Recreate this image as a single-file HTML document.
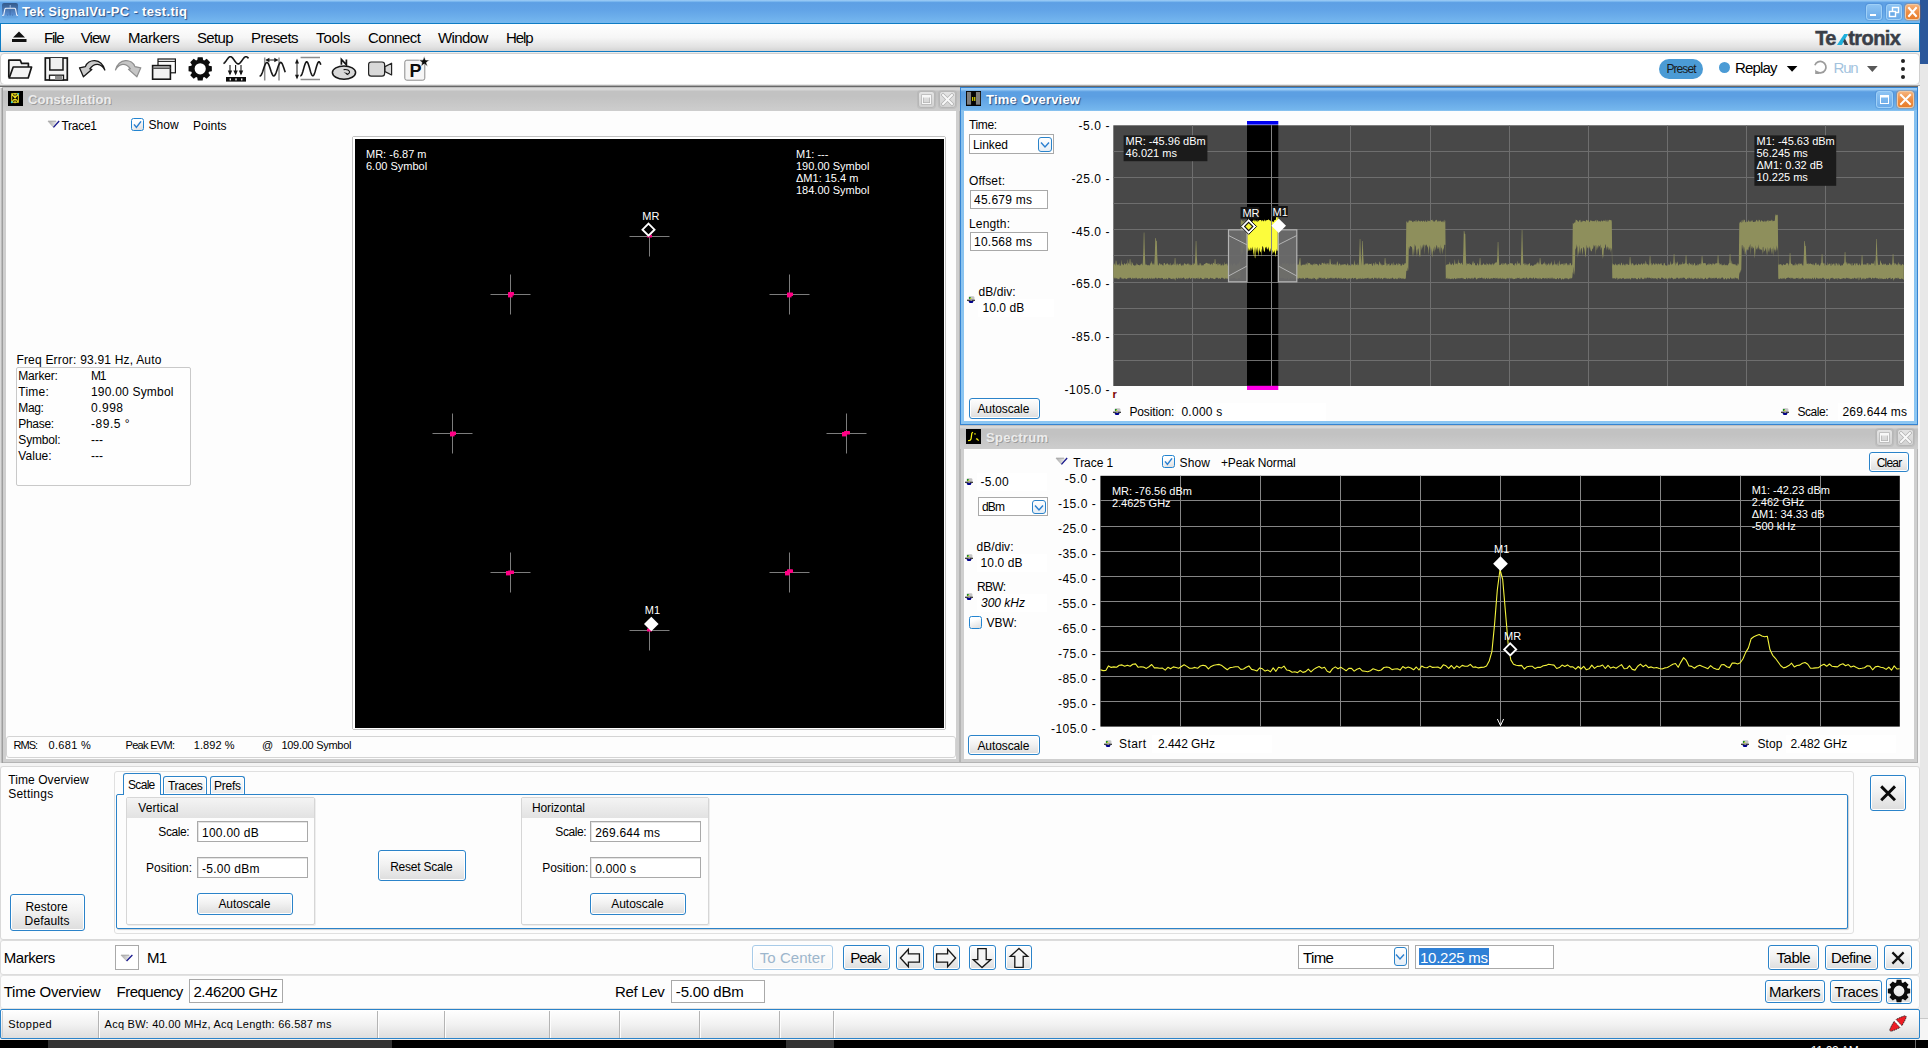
<!DOCTYPE html>
<html><head><meta charset="utf-8"><title>Tek SignalVu-PC - test.tiq</title>
<style>
html,body{margin:0;padding:0;height:1048px;overflow:hidden;}
body{width:1928px;height:1048px;overflow:hidden;position:relative;background:#f0f0f0;font-family:"Liberation Sans",sans-serif;}
div,span.t,svg{position:absolute;box-sizing:border-box;}
span.t{white-space:pre;}
.btn{border:1px solid #2b83c9;border-radius:3px;background:linear-gradient(#fefefe,#f2f2f2 45%,#dddddd);box-shadow:inset 0 0 0 1px #fff;}
.inp{border:1px solid #a9a9a9;background:#fff;box-shadow:inset 1px 1px 0 #e4e4e4;}
.dd{border:1px solid #2b83c9;border-radius:3px;background:linear-gradient(#fefefe,#e4ecf4);}
</style></head>
<body>
<div style="left:1920px;top:0px;width:8px;height:64px;background:#2b579a;"></div>
<div style="left:1920px;top:64px;width:8px;height:954px;background:#e8e8e8;"></div>
<div style="left:1920px;top:1018px;width:8px;height:22px;background:#f5f5f5;border-top:1px solid #c8c8c8;"></div>
<div style="left:0px;top:1040px;width:1928px;height:8px;background:#000;"></div>
<div style="left:48px;top:1040px;width:344px;height:8px;background:#333;"></div>
<div style="left:786px;top:1040px;width:48px;height:8px;background:#333;"></div>
<div style="left:1915px;top:1040px;width:1px;height:8px;background:#6a6a6a;"></div>
<span class="t" style="left:1810.7px;top:1044.6px;font-size:12px;line-height:12px;color:#fff;letter-spacing:-0.26px;">11:02 AM</span>
<div style="left:0px;top:0px;width:1920px;height:24px;background:linear-gradient(#a2cff6 0,#7db9f0 1.4px,#5d9fe4 2.6px,#62a4e7 45%,#76b8ef);border-bottom:1px solid #0f7cc4;"></div>
<span class="t" style="left:22.0px;top:5px;font-size:13px;line-height:13px;color:#fff;font-weight:bold;text-shadow:1px 1px 1px rgba(10,30,80,.65);letter-spacing:0.33px;">Tek SignalVu-PC - test.tiq</span>
<svg style="left:2px;top:3px" width="17" height="16" viewBox="2 3 17 16"><defs><linearGradient id="ai" x1="0" y1="0" x2="0" y2="1"><stop offset="0" stop-color="#33598a"/><stop offset="0.78" stop-color="#5a8fd4"/><stop offset="0.8" stop-color="#5f9cdc"/><stop offset="1" stop-color="#66a6e2"/></linearGradient></defs><rect x="2" y="3" width="16" height="15.6" rx="2" fill="url(#ai)"/><path d="M2.2 15.5 L3.7 15 L4.8 9.3 Q5 8.3 6 8.3 L14.4 8.3 Q15.4 8.3 15.6 9.3 L16.7 15 L18 15.5" fill="none" stroke="#eef2fa" stroke-width="1.05"/><path d="M10.2 5 V8" stroke="#a9c3e6" stroke-width="0.9"/><path d="M7.6 14.6 V15.6 M12.6 14.6 V15.6 M10.1 10 V15.6" stroke="#3d68a4" stroke-width="0.8"/></svg>
<div style="left:1866px;top:4px;width:16px;height:16px;background:linear-gradient(#8cc3f3,#6aaae8);border:1px solid #9fd0f7;border-radius:3px;box-shadow:0 0 0 1px #3a78c244;"></div><svg style="left:1866px;top:4px" width="16" height="16" viewBox="0 0 16 16"><rect x="4" y="10" width="6" height="2" fill="#fff"/></svg>
<div style="left:1886px;top:4px;width:16px;height:16px;background:linear-gradient(#8cc3f3,#6aaae8);border:1px solid #9fd0f7;border-radius:3px;box-shadow:0 0 0 1px #3a78c244;"></div><svg style="left:1886px;top:4px" width="16" height="16" viewBox="0 0 16 16"><rect x="6.5" y="3.5" width="6" height="5" fill="none" stroke="#fff" stroke-width="1.4"/><rect x="3.5" y="7.5" width="6" height="5" fill="#6aaae8" stroke="#fff" stroke-width="1.4"/></svg>
<div style="left:1905px;top:4px;width:15px;height:16px;background:linear-gradient(#f6b27a,#ee8f45 50%,#e87d2a);border:1px solid #f3c9a0;border-radius:3px;box-shadow:0 0 0 1px #c96a2244;"></div><svg style="left:1905px;top:4px" width="15" height="16" viewBox="0 0 15 16"><path d="M4 4 L11 12 M11 4 L4 12" stroke="#fff" stroke-width="2" stroke-linecap="square"/></svg>
<div style="left:0px;top:24px;width:1920px;height:28px;background:linear-gradient(#ffffff,#f6f6f6 50%,#e2e2e2 85%,#d4d4d4);border-left:1px solid #0f7cc4;border-right:1px solid #0f7cc4;border-bottom:1px solid #0f7cc4;"></div>
<svg style="left:11px;top:31px" width="16" height="12" viewBox="0 0 16 12"><path d="M8 0.5 L14 6.5 L2 6.5 Z" fill="#111"/><rect x="1" y="8" width="14.5" height="3" fill="#111"/></svg>
<span class="t" style="left:44.0px;top:30px;font-size:15px;line-height:15px;color:#000;letter-spacing:-1.20px;">File</span>
<span class="t" style="left:80.7px;top:30px;font-size:15px;line-height:15px;color:#000;letter-spacing:-0.92px;">View</span>
<span class="t" style="left:128.0px;top:30px;font-size:15px;line-height:15px;color:#000;letter-spacing:-0.41px;">Markers</span>
<span class="t" style="left:197.0px;top:30px;font-size:15px;line-height:15px;color:#000;letter-spacing:-0.63px;">Setup</span>
<span class="t" style="left:251.0px;top:30px;font-size:15px;line-height:15px;color:#000;letter-spacing:-0.56px;">Presets</span>
<span class="t" style="left:316.0px;top:30px;font-size:15px;line-height:15px;color:#000;letter-spacing:-0.11px;">Tools</span>
<span class="t" style="left:368.0px;top:30px;font-size:15px;line-height:15px;color:#000;letter-spacing:-0.48px;">Connect</span>
<span class="t" style="left:438.0px;top:30px;font-size:15px;line-height:15px;color:#000;letter-spacing:-0.61px;">Window</span>
<span class="t" style="left:506.0px;top:30px;font-size:15px;line-height:15px;color:#000;letter-spacing:-1.12px;">Help</span>
<span class="t" style="left:1815.2px;top:27.799999999999997px;font-size:20px;line-height:20px;color:#3a3f48;font-weight:bold;-webkit-text-stroke:0.5px #3a3f48;letter-spacing:-0.66px;">Te</span>
<span class="t" style="left:1848.2px;top:27.799999999999997px;font-size:20px;line-height:20px;color:#3a3f48;font-weight:bold;-webkit-text-stroke:0.5px #3a3f48;letter-spacing:-0.55px;">tronix</span>
<svg style="left:1834px;top:28px" width="22" height="20" viewBox="1834 28 22 20"><path d="M1837 44.9 L1841.8 44.9 L1848.2 34.1 L1844.2 34.1 Z" fill="#1fb0dc"/><path d="M1843.2 41.4 L1844.9 38.6 L1848.2 44.9 L1844.6 44.9 Z" fill="#3a3f48"/><path d="M1849 37.4 L1852.2 30.6 L1852.2 37.4 Z" fill="#3a3f48"/></svg>
<div style="left:0px;top:52px;width:1920px;height:2px;background:#ececec;"></div>
<div style="left:0px;top:53px;width:1920px;height:32px;background:#fff;border:1px solid #d0d0d0;border-radius:4px;"></div>
<div style="left:0px;top:83.6px;width:1920px;height:3.5px;background:linear-gradient(#ffffff 0,#d4d4d4 30%,#9a9a9a 60%,#686868 82%,#666 100%);"></div>
<div style="left:1659px;top:59px;width:44px;height:20px;background:#4b9bd5;border-radius:10px;"></div>
<span class="t" style="left:1666.5px;top:63px;font-size:12px;line-height:12px;color:#1a1a1a;letter-spacing:-0.94px;">Preset</span>
<div style="left:1718.5px;top:62px;width:11px;height:11px;background:#4b9bd5;border-radius:50%;"></div>
<span class="t" style="left:1735.0px;top:60px;font-size:15px;line-height:15px;color:#000;letter-spacing:-0.84px;">Replay</span>
<svg style="left:1786px;top:65px" width="12" height="8" viewBox="0 0 12 8"><path d="M0.8 1 L11.4 1 L6.1 6.8 Z" fill="#000"/></svg>
<svg style="left:1812px;top:58px" width="18" height="18" viewBox="1812 58 18 18"><path d="M1814.9 65.2 A5.7 5.7 0 1 1 1817.0 71.8" fill="none" stroke="#9b9b9b" stroke-width="1.7"/><path d="M1815.2 69.4 L1815.2 74 L1819.8 74 Z" fill="#9b9b9b"/></svg>
<span class="t" style="left:1833.5px;top:60px;font-size:15px;line-height:15px;color:#a3c3de;letter-spacing:-1.20px;">Run</span>
<svg style="left:1866px;top:65px" width="12" height="8" viewBox="0 0 12 8"><path d="M1 1.1 L11.7 1.1 L6.35 6.9 Z" fill="#585858"/></svg>
<div style="left:1901.1px;top:58.8px;width:4.4px;height:4.4px;background:#222;border-radius:50%;"></div>
<div style="left:1901.1px;top:66.89999999999999px;width:4.4px;height:4.4px;background:#222;border-radius:50%;"></div>
<div style="left:1901.1px;top:74.89999999999999px;width:4.4px;height:4.4px;background:#222;border-radius:50%;"></div>
<svg style="left:0;top:0" width="440" height="90" viewBox="0 0 440 90"><path d="M8.8 77.5 L8.8 60.2 L20.2 60.2 L21.6 63.4 L28.4 63.4 L28.4 67" fill="#f2f2f2" stroke="#161616" stroke-width="1.7" stroke-linejoin="round"/><path d="M9.2 78 L13.2 67 L31.6 67 L28.2 78 Z" fill="#f4f4f4" stroke="#161616" stroke-width="1.7" stroke-linejoin="round"/><rect x="45.3" y="58" width="22" height="22" fill="#f4f4f4" stroke="#161616" stroke-width="1.7"/><path d="M49.8 58 L49.8 70 L63 70 L63 58" fill="#f0f0f0" stroke="#161616" stroke-width="1.5"/><rect x="49.5" y="75.2" width="14" height="4.8" fill="#fff" stroke="#161616" stroke-width="1.3"/><rect x="55" y="75.8" width="7.2" height="4" fill="#8c8c8c"/><path d="M79.5 67.8 L85.4 66.6 C88.0 59.0 101.2 57.0 104.8 70.0 C101.0 62.6 94.2 62.6 89.8 68.8 L91.8 69.4 L83.4 76.8 Z" fill="#cbcbcb" stroke="#161616" stroke-width="1.3" stroke-linejoin="round"/><path d="M140.8 67.8 L134.9 66.6 C132.3 59.0 119.1 57.0 115.5 70.0 C119.3 62.6 126.1 62.6 130.5 68.8 L128.5 69.4 L136.9 76.8 Z" fill="#c6c6c6" stroke="#8e8e8e" stroke-width="1.2" stroke-linejoin="round"/><rect x="158" y="59" width="17.4" height="13.8" fill="#fafafa" stroke="#161616" stroke-width="1.2"/><path d="M158 61.4 H175.4" stroke="#161616" stroke-width="1"/><rect x="152.6" y="65.6" width="17.8" height="13.6" fill="#f2f2f2" stroke="#161616" stroke-width="1.6"/><path d="M152.6 68.2 H170.4" stroke="#555" stroke-width="1.6"/><path d="M197.24 60.00 L197.74 57.16 L202.66 57.16 L203.16 60.00 L204.32 60.48 L206.70 58.83 L210.17 62.30 L208.52 64.68 L209.00 65.84 L211.84 66.34 L211.84 71.26 L209.00 71.76 L208.52 72.92 L210.17 75.30 L206.70 78.77 L204.32 77.12 L203.16 77.60 L202.66 80.44 L197.74 80.44 L197.24 77.60 L196.08 77.12 L193.70 78.77 L190.23 75.30 L191.88 72.92 L191.40 71.76 L188.56 71.26 L188.56 66.34 L191.40 65.84 L191.88 64.68 L190.23 62.30 L193.70 58.83 L196.08 60.48 Z M205.80 68.80 A5.6 5.6 0 1 0 194.60 68.80 A5.6 5.6 0 1 0 205.80 68.80 Z" fill="#0c0c0c" fill-rule="evenodd"/><path d="M223.50 63.66 L224.12 63.23 L224.75 62.61 L225.38 61.85 L226.00 61.00 L226.62 60.10 L227.25 59.21 L227.88 58.39 L228.50 57.69 L229.12 57.16 L229.75 56.82 L230.38 56.70 L231.00 56.81 L231.62 57.13 L232.25 57.66 L232.88 58.35 L233.50 59.17 L234.12 60.05 L234.75 60.95 L235.38 61.81 L236.00 62.58 L236.62 63.20 L237.25 63.64 L237.88 63.87 L238.50 63.87 L239.12 63.66 L239.75 63.23 L240.38 62.61 L241.00 61.85 L241.62 61.00 L242.25 60.10 L242.88 59.21 L243.50 58.39 L244.12 57.69 L244.75 57.16 L245.38 56.82 L246.00 56.70 L246.62 56.81 L247.25 57.13 L247.88 57.66 L248.50 58.35" fill="none" stroke="#161616" stroke-width="1.6"/><path d="M230 65 V74" stroke="#161616" stroke-width="1.1"/><path d="M227.8 70.6 L232.2 70.6 L230 75.4 Z" fill="#161616"/><path d="M235.6 65 V74" stroke="#161616" stroke-width="1.1"/><path d="M233.4 70.6 L237.79999999999998 70.6 L235.6 75.4 Z" fill="#161616"/><path d="M241 65 V74" stroke="#161616" stroke-width="1.1"/><path d="M238.8 70.6 L243.2 70.6 L241 75.4 Z" fill="#161616"/><rect x="226" y="77" width="20" height="4.6" fill="#0c0c0c"/><rect x="229.6" y="78.4" width="1.4" height="2" fill="#eee"/><rect x="235.3" y="78.4" width="1.4" height="2" fill="#eee"/><rect x="241" y="78.4" width="1.4" height="2" fill="#eee"/><path d="M264.7 57.5 V80.5 M279 57.5 V80.5" stroke="#8c8c8c" stroke-width="1.5"/><path d="M266.5 60 H277.5" stroke="#161616" stroke-width="1"/><path d="M265.4 60 L269.4 57.8 L269.4 62.2 Z M278.3 60 L274.3 57.8 L274.3 62.2 Z" fill="#161616"/><path d="M259.60 75.89 L260.24 75.96 L260.88 75.46 L261.52 74.43 L262.16 72.97 L262.80 71.19 L263.44 69.24 L264.08 67.29 L264.72 65.50 L265.36 64.02 L266.00 62.98 L266.64 62.45 L267.28 62.49 L267.92 63.10 L268.56 64.21 L269.20 65.75 L269.84 67.57 L270.48 69.53 L271.12 71.46 L271.76 73.20 L272.40 74.61 L273.04 75.56 L273.68 75.98 L274.32 75.83 L274.96 75.13 L275.60 73.93 L276.24 72.33 L276.88 70.46 L277.52 68.50 L278.16 66.59 L278.80 64.90 L279.44 63.57 L280.08 62.71 L280.72 62.40 L281.36 62.66 L282.00 63.46 L282.64 64.75 L283.28 66.41 L283.92 68.30 L284.56 70.27 L285.20 72.15" fill="none" stroke="#161616" stroke-width="1.6"/><path d="M300.6 57.6 H320 M300.6 79.6 H320" stroke="#8c8c8c" stroke-width="1.5"/><path d="M297 61 V77" stroke="#161616" stroke-width="1"/><path d="M297 58.6 L295 63.4 L299 63.4 Z M297 79.6 L295 74.8 L299 74.8 Z" fill="#161616"/><path d="M300.20 75.69 L300.71 75.77 L301.23 75.38 L301.75 74.53 L302.26 73.28 L302.77 71.72 L303.29 69.96 L303.81 68.12 L304.32 66.33 L304.83 64.70 L305.35 63.37 L305.87 62.40 L306.38 61.88 L306.89 61.84 L307.41 62.28 L307.93 63.18 L308.44 64.46 L308.95 66.04 L309.47 67.81 L309.99 69.65 L310.50 71.44 L311.01 73.04 L311.53 74.34 L312.05 75.27 L312.56 75.74 L313.07 75.74 L313.59 75.25 L314.11 74.32 L314.62 73.00 L315.13 71.40 L315.65 69.61 L316.17 67.77 L316.68 66.00 L317.19 64.42 L317.71 63.15 L318.23 62.27 L318.74 61.84 L319.25 61.89 L319.77 62.42 L320.29 63.39 L320.80 64.74" fill="none" stroke="#161616" stroke-width="1.6"/><ellipse cx="344" cy="72.6" rx="11.6" ry="6.6" fill="#d9d9d9" stroke="#161616" stroke-width="1.5"/><path d="M343.6 69.6 C350 68.6 351.6 73.6 346.6 74.4" fill="none" stroke="#161616" stroke-width="1.1"/><path d="M343.6 72.2 L348.4 75.6 L347 73 Z" fill="#161616"/><path d="M341.4 64.8 V59.4 L346.4 64.8 V59.4" fill="none" stroke="#161616" stroke-width="1.7"/><rect x="368.6" y="62" width="16" height="14.2" rx="2.6" fill="#d9d9d9" stroke="#222" stroke-width="1.2"/><path d="M385 66.6 L391.6 63.2 L391.6 75 L385 71.6 Z" fill="#d9d9d9" stroke="#222" stroke-width="1.2" stroke-linejoin="round"/><rect x="404.8" y="60.2" width="20" height="20" rx="2" fill="#f6f6f6" stroke="#8a8a8a" stroke-width="1"/><path d="M424.2 56.2 L425.6 60 L429.6 60 L426.4 62.5 L427.6 66.4 L424.2 64 L420.8 66.4 L422 62.5 L418.8 60 L422.8 60 Z" fill="#0c0c0c" stroke="#fff" stroke-width="0.6"/></svg>
<span class="t" style="left:409.5px;top:62px;font-size:18px;line-height:18px;color:#0c0c0c;font-weight:bold;">P</span>
<div style="left:1918px;top:86px;width:2px;height:680px;background:#f6f6f6;"></div>
<div style="left:2px;top:87px;width:958px;height:676px;background:#b4b4b4;"></div>
<div style="left:3px;top:88px;width:956px;height:674px;background:#cfcfcf;"></div>
<div style="left:2px;top:87px;width:958px;height:23.5px;background:linear-gradient(#a8a8a8 0,#d8d8d8 1px,#d8d8d8 2.4px,#c2c2c2 4.4px,#c2c2c2 9.5px,#cdcdcd 23.5px);"></div>
<div style="left:6px;top:110.5px;width:950px;height:648.5px;background:#fdfdfd;"></div>
<svg style="left:8px;top:91px" width="15" height="15" viewBox="0 0 16 16"><rect width="16" height="16" fill="#000"/><path d="M4 3 L11 3 L11 12 L4 12 Z M4 3 L11 12 M11 3 L4 12 M7.5 2 V13" stroke="#f0e020" stroke-width="1.1" fill="none"/><circle cx="4" cy="12" r="1" fill="#20d0e0"/><circle cx="11" cy="3" r="1" fill="#20d0e0"/></svg>
<span class="t" style="left:28.0px;top:92.8px;font-size:13px;line-height:13px;color:#ececec;font-weight:bold;text-shadow:1px 1px 0 rgba(120,120,120,.55);letter-spacing:0.10px;">Constellation</span>
<div style="left:0px;top:88px;width:3px;height:675px;background:linear-gradient(90deg,#e8e8e8,#8f8f8f);"></div>
<div style="left:918px;top:91px;width:17px;height:17px;background:linear-gradient(#e4e4e4,#d2d2d2);border:1px solid #b6b6b6;border-radius:3px;box-shadow:0 0 0 1px #a0a0a044;"></div><svg style="left:918px;top:91px" width="17" height="17" viewBox="0 0 17 17"><rect x="4.5" y="4.5" width="8" height="8" fill="none" stroke="#b4b4b4" stroke-width="2.4"/><rect x="4.5" y="4.5" width="8" height="8" fill="none" stroke="#f8f8f8" stroke-width="1"/><rect x="4" y="4" width="9" height="2.5" fill="#f8f8f8"/></svg>
<div style="left:939px;top:91px;width:17px;height:17px;background:linear-gradient(#e4e4e4,#d2d2d2);border:1px solid #b6b6b6;border-radius:3px;box-shadow:0 0 0 1px #a0a0a044;"></div><svg style="left:939px;top:91px" width="17" height="17" viewBox="0 0 17 17"><path d="M4 4 L13 13 M13 4 L4 13" stroke="#b0b0b0" stroke-width="3.4" stroke-linecap="square"/><path d="M4 4 L13 13 M13 4 L4 13" stroke="#f8f8f8" stroke-width="2" stroke-linecap="square"/></svg>
<svg style="left:47.1px;top:120.1px" width="13.2" height="8.4" viewBox="-1 -1 13.2 8.4"><defs><linearGradient id="tg48" x1="0" y1="0" x2="1" y2="0"><stop offset="0" stop-color="#a8a8a8"/><stop offset="0.6" stop-color="#dcdcdc"/><stop offset="0.85" stop-color="#f4f4f4"/></linearGradient></defs><path d="M0 0.2 L11.2 0.2 L5.6 6.4 Z" fill="url(#tg48)"/><path d="M0 0.2 H8.064" stroke="#9c9c9c" stroke-width="0.9"/><path d="M0 0.2 L5.6 6.4" stroke="#b4b4b4" stroke-width="0.8"/><path d="M11.2 0 L5.5 6.4" stroke="#14148c" stroke-width="1.25"/></svg>
<span class="t" style="left:61.5px;top:120px;font-size:12px;line-height:12px;color:#000;letter-spacing:-0.28px;">Trace1</span>
<div style="left:131px;top:117.9px;width:13px;height:13px;background:linear-gradient(160deg,#ffffff 30%,#dcdcdc);border:1.6px solid #2384d0;border-radius:2.5px;"></div>
<svg style="left:131px;top:117.9px" width="13" height="13" viewBox="0 0 13 13"><path d="M3 6.4 L5.4 9.4 L10 3.4" fill="none" stroke="#2a7fd0" stroke-width="1.5"/></svg>
<span class="t" style="left:148.4px;top:118.69999999999999px;font-size:12px;line-height:12px;color:#000;letter-spacing:0.09px;">Show</span>
<span class="t" style="left:193.0px;top:120px;font-size:12px;line-height:12px;color:#000;letter-spacing:0.03px;">Points</span>
<div style="left:352px;top:136px;width:594px;height:594px;background:#f0f0f0;border:1px solid #c2c2c2;border-radius:2px;"></div>
<div style="left:353px;top:137px;width:592px;height:592px;background:#ffffff;"></div>
<div style="left:355px;top:139px;width:589px;height:589px;background:#000;"></div>
<span class="t" style="left:366.0px;top:149px;font-size:11px;line-height:11px;color:#fff;">MR: -6.87 m</span>
<span class="t" style="left:366.0px;top:161px;font-size:11px;line-height:11px;color:#fff;">6.00 Symbol</span>
<span class="t" style="left:796.0px;top:149px;font-size:11px;line-height:11px;color:#fff;">M1: ---</span>
<span class="t" style="left:796.0px;top:161px;font-size:11px;line-height:11px;color:#fff;">190.00 Symbol</span>
<span class="t" style="left:796.0px;top:173px;font-size:11px;line-height:11px;color:#fff;">ΔM1: 15.4 m</span>
<span class="t" style="left:796.0px;top:185px;font-size:11px;line-height:11px;color:#fff;">184.00 Symbol</span>
<svg style="left:0;top:0" width="960" height="740" viewBox="0 0 960 740"><path d="M629.5 236.5 H669.5 M649.5 236.5 V256.5" stroke="#7c7c7c" stroke-width="1"/><rect x="647.0" y="234.5" width="5" height="3" rx="0.6" fill="#ff0084"/><path d="M490.5 294.5 H530.5 M510.5 274.5 V314.5" stroke="#7c7c7c" stroke-width="1"/><rect x="508.0" y="293.0" width="4.6" height="4.4" fill="#ff0084"/><rect x="508.0" y="291.9" width="6" height="3.6" rx="0.6" fill="#ff0084"/><path d="M769.5 294.5 H809.5 M789.5 274.5 V314.5" stroke="#7c7c7c" stroke-width="1"/><rect x="787.0" y="293.0" width="4.6" height="4.4" fill="#ff0084"/><rect x="787.0" y="292.5" width="6" height="3.6" rx="0.6" fill="#ff0084"/><path d="M432.5 433.5 H472.5 M452.5 413.5 V453.5" stroke="#7c7c7c" stroke-width="1"/><rect x="450.0" y="432.0" width="4.6" height="4.4" fill="#ff0084"/><rect x="450.0" y="431.5" width="6" height="3.6" rx="0.6" fill="#ff0084"/><path d="M826.5 433.5 H866.5 M846.5 413.5 V453.5" stroke="#7c7c7c" stroke-width="1"/><rect x="842.0" y="432.0" width="4.6" height="4.4" fill="#ff0084"/><rect x="844.0" y="430.9" width="6" height="3.6" rx="0.6" fill="#ff0084"/><path d="M490.5 572.5 H530.5 M510.5 552.5 V592.5" stroke="#7c7c7c" stroke-width="1"/><rect x="506.0" y="571.0" width="4.6" height="4.4" fill="#ff0084"/><rect x="508.0" y="570.5" width="6" height="3.6" rx="0.6" fill="#ff0084"/><path d="M769.5 572.5 H809.5 M789.5 552.5 V592.5" stroke="#7c7c7c" stroke-width="1"/><rect x="785.0" y="571.0" width="4.6" height="4.4" fill="#ff0084"/><rect x="787.0" y="569.3" width="6" height="3.6" rx="0.6" fill="#ff0084"/><path d="M629.5 630.5 H669.5 M649.5 630.5 V650.5" stroke="#7c7c7c" stroke-width="1"/><rect x="647.0" y="628.5" width="5" height="3" rx="0.6" fill="#ff0084"/><path d="M648.5 222.39999999999998 L655.8 229.7 L648.5 237.0 L641.2 229.7 Z" fill="#000"/><path d="M648.5 223.7 L654.5 229.7 L648.5 235.7 L642.5 229.7 Z" fill="none" stroke="#fff" stroke-width="1.9"/><path d="M651.3 616.7 L658.5999999999999 624 L651.3 631.3 L644.0 624 Z" fill="#fff"/></svg>
<span class="t" style="left:642.3px;top:210.5px;font-size:11px;line-height:11px;color:#fff;">MR</span>
<span class="t" style="left:644.8px;top:605px;font-size:11px;line-height:11px;color:#fff;">M1</span>
<span class="t" style="left:16.4px;top:354px;font-size:12px;line-height:12px;color:#000;letter-spacing:0.20px;">Freq Error: 93.91 Hz, Auto</span>
<div style="left:16px;top:367px;width:175px;height:119px;border:1px solid #c9c9c9;border-radius:2px;background:#fefefe;"></div>
<span class="t" style="left:18.3px;top:370px;font-size:12px;line-height:12px;color:#000;letter-spacing:-0.18px;">Marker:</span>
<span class="t" style="left:91.0px;top:370px;font-size:12px;line-height:12px;color:#000;letter-spacing:-1.20px;">M1</span>
<span class="t" style="left:18.3px;top:386px;font-size:12px;line-height:12px;color:#000;letter-spacing:0.26px;">Time:</span>
<span class="t" style="left:91.0px;top:386px;font-size:12px;line-height:12px;color:#000;letter-spacing:0.20px;">190.00 Symbol</span>
<span class="t" style="left:18.3px;top:402px;font-size:12px;line-height:12px;color:#000;letter-spacing:-0.36px;">Mag:</span>
<span class="t" style="left:91.0px;top:402px;font-size:12px;line-height:12px;color:#000;letter-spacing:0.49px;">0.998</span>
<span class="t" style="left:18.3px;top:418px;font-size:12px;line-height:12px;color:#000;letter-spacing:-0.31px;">Phase:</span>
<span class="t" style="left:91.0px;top:418px;font-size:12px;line-height:12px;color:#000;letter-spacing:0.52px;">-89.5 °</span>
<span class="t" style="left:18.3px;top:434px;font-size:12px;line-height:12px;color:#000;letter-spacing:-0.16px;">Symbol:</span>
<span class="t" style="left:91.0px;top:434px;font-size:12px;line-height:12px;color:#000;">---</span>
<span class="t" style="left:18.3px;top:450px;font-size:12px;line-height:12px;color:#000;letter-spacing:0.05px;">Value:</span>
<span class="t" style="left:91.0px;top:450px;font-size:12px;line-height:12px;color:#000;">---</span>
<div style="left:6px;top:736px;width:950px;height:22px;border:1px solid #d4d4d4;border-radius:3px;background:#fdfdfd;"></div>
<span class="t" style="left:13.5px;top:740px;font-size:11px;line-height:11px;color:#000;letter-spacing:-0.97px;">RMS:</span>
<span class="t" style="left:48.5px;top:740px;font-size:11px;line-height:11px;color:#000;letter-spacing:0.32px;">0.681 %</span>
<span class="t" style="left:125.5px;top:740px;font-size:11px;line-height:11px;color:#000;letter-spacing:-0.69px;">Peak EVM:</span>
<span class="t" style="left:193.7px;top:740px;font-size:11px;line-height:11px;color:#000;letter-spacing:0.10px;">1.892 %</span>
<span class="t" style="left:262.0px;top:740px;font-size:11px;line-height:11px;color:#000;">@</span>
<span class="t" style="left:281.4px;top:740px;font-size:11px;line-height:11px;color:#000;letter-spacing:-0.28px;">109.00 Symbol</span>
<div style="left:960px;top:87px;width:958px;height:338px;background:#3584d2;"></div>
<div style="left:961.2px;top:88px;width:955.6px;height:335.8px;background:linear-gradient(#86c0ee,#8cc6f2);"></div>
<div style="left:961.2px;top:87.8px;width:955.6px;height:22.7px;background:linear-gradient(#9ccdf6 0,#9ccdf6 1.3px,#5c9fe2 3.8px,#5c9fe2 8.5px,#76b8ee 22.7px);"></div>
<div style="left:964px;top:110.5px;width:950px;height:310.5px;background:#fdfdfd;"></div>
<svg style="left:966px;top:91px" width="15" height="15" viewBox="0 0 16 16"><rect width="16" height="16" fill="#050505"/><rect x="1" y="1" width="4.4" height="13.6" fill="#7e7e7e"/><rect x="10.6" y="1" width="4.6" height="13.6" fill="#7e7e7e"/><rect x="6.6" y="6.4" width="1.1" height="4.2" fill="#f8f000"/><rect x="8.8" y="6.4" width="1.1" height="4.2" fill="#f8f000"/></svg>
<span class="t" style="left:986.0px;top:92.8px;font-size:13px;line-height:13px;color:#fff;font-weight:bold;text-shadow:1px 1px 1px rgba(10,30,80,.65);letter-spacing:0.20px;">Time Overview</span>
<div style="left:1876px;top:91px;width:17px;height:17px;background:linear-gradient(#8cc3f3,#6aaae8);border:1px solid #9fd0f7;border-radius:3px;box-shadow:0 0 0 1px #3a78c244;"></div><svg style="left:1876px;top:91px" width="17" height="17" viewBox="0 0 17 17"><rect x="4.5" y="4.5" width="8" height="8" fill="none" stroke="#fff" stroke-width="1"/><rect x="4" y="4" width="9" height="2.5" fill="#fff"/></svg>
<div style="left:1897px;top:91px;width:17px;height:17px;background:linear-gradient(#f6b27a,#ee8f45 50%,#e87d2a);border:1px solid #f3c9a0;border-radius:3px;box-shadow:0 0 0 1px #c96a2244;"></div><svg style="left:1897px;top:91px" width="17" height="17" viewBox="0 0 17 17"><path d="M4 4 L13 13 M13 4 L4 13" stroke="#fff" stroke-width="2" stroke-linecap="square"/></svg>
<span class="t" style="left:969.0px;top:119px;font-size:12px;line-height:12px;color:#000;letter-spacing:-0.39px;">Time:</span>
<div style="left:969px;top:134px;width:85px;height:20px;border:1px solid #a9a9a9;background:#fff;"></div>
<div style="left:1038px;top:137px;width:14px;height:15px;border:1px solid #2b83c9;border-radius:3px;background:linear-gradient(#ffffff,#e6eef6);"></div>
<svg style="left:1040.0px;top:141.0px" width="10" height="8" viewBox="0 0 10 8"><path d="M1 1.5 L5 6 L9 1.5" fill="none" stroke="#2a7fd0" stroke-width="1.4"/></svg>
<span class="t" style="left:973.0px;top:139px;font-size:12px;line-height:12px;color:#000;letter-spacing:-0.07px;">Linked</span>
<span class="t" style="left:969.0px;top:175px;font-size:12px;line-height:12px;color:#000;letter-spacing:0.14px;">Offset:</span>
<div style="left:970px;top:190px;width:78px;height:19px;border:1px solid #a9a9a9;background:#fff;"></div>
<span class="t" style="left:974.0px;top:193.6px;font-size:12px;line-height:12px;color:#000;letter-spacing:0.24px;">45.679 ms</span>
<span class="t" style="left:969.0px;top:217.5px;font-size:12px;line-height:12px;color:#000;letter-spacing:0.16px;">Length:</span>
<div style="left:970px;top:232px;width:78px;height:19px;border:1px solid #a9a9a9;background:#fff;"></div>
<span class="t" style="left:974.0px;top:236px;font-size:12px;line-height:12px;color:#000;letter-spacing:0.24px;">10.568 ms</span>
<svg style="left:967px;top:296px" width="9" height="8" viewBox="0 0 9 8"><rect x="1.6" y="0.2" width="5.8" height="3.6" rx="1.4" fill="#c4c4c4"/><rect x="2" y="1.1" width="1.7" height="1.7" fill="#0a8a0a"/><rect x="3.3" y="2" width="1" height="1" fill="#e6e600"/><rect x="0" y="3.7" width="8" height="1.1" fill="#111"/><rect x="3.6" y="3.7" width="1" height="1.1" fill="#ddd"/><path d="M1.5 5 H6.6 L5.6 6.9 H2.5 Z" fill="#00008a"/></svg>
<div style="left:978px;top:299px;width:76px;height:18px;background:#fff;"></div>
<span class="t" style="left:978.6px;top:285.5px;font-size:12px;line-height:12px;color:#000;letter-spacing:0.05px;">dB/div:</span>
<span class="t" style="left:982.4px;top:302px;font-size:12px;line-height:12px;color:#000;letter-spacing:0.10px;">10.0 dB</span>
<div style="left:968.5px;top:397.5px;width:71px;height:21px;"></div>
<div class="btn" style="left:968.5px;top:397.5px;width:71px;height:21px;"></div>
<span class="t" style="left:977.4px;top:403px;font-size:12px;line-height:12px;color:#000;letter-spacing:-0.09px;">Autoscale</span>
<span class="t" style="left:1078.5px;top:120.19999999999999px;font-size:12px;line-height:12px;color:#000;letter-spacing:0.58px;">-5.0 -</span>
<span class="t" style="left:1071.6px;top:172.92px;font-size:12px;line-height:12px;color:#000;letter-spacing:0.52px;">-25.0 -</span>
<span class="t" style="left:1071.6px;top:225.64px;font-size:12px;line-height:12px;color:#000;letter-spacing:0.52px;">-45.0 -</span>
<span class="t" style="left:1071.6px;top:278.36px;font-size:12px;line-height:12px;color:#000;letter-spacing:0.52px;">-65.0 -</span>
<span class="t" style="left:1071.6px;top:331.08px;font-size:12px;line-height:12px;color:#000;letter-spacing:0.52px;">-85.0 -</span>
<span class="t" style="left:1064.6px;top:383.8px;font-size:12px;line-height:12px;color:#000;letter-spacing:0.49px;">-105.0 -</span>
<svg style="left:0;top:0" width="1928" height="400" viewBox="0 0 1928 400"><rect x="1113.3" y="125.3" width="790.7" height="260.7" fill="#484848"/><rect x="1247" y="125.3" width="31.299999999999955" height="260.7" fill="#000"/><path d="M1192.5 125.3 V386 M1271.5 125.3 V386 M1350.5 125.3 V386 M1430.5 125.3 V386 M1509.5 125.3 V386 M1588.5 125.3 V386 M1667.5 125.3 V386 M1746.5 125.3 V386 M1825.5 125.3 V386 M1113.3 151.5 H1904 M1113.3 177.5 H1904 M1113.3 203.5 H1904 M1113.3 229.5 H1904 M1113.3 255.5 H1904 M1113.3 282.5 H1904 M1113.3 308.5 H1904 M1113.3 334.5 H1904 M1113.3 360.5 H1904 " stroke="#6e6e6e" stroke-width="1" fill="none"/><path d="M1113.3 264.2 L1113.8 264.4 L1114.3 264.8 L1114.8 263.0 L1115.3 265.9 L1115.8 260.4 L1116.3 260.8 L1116.8 264.4 L1117.3 264.2 L1117.8 265.5 L1118.3 263.7 L1118.8 265.5 L1119.3 262.7 L1119.8 265.9 L1120.3 265.3 L1120.8 265.9 L1121.3 259.5 L1121.8 264.2 L1122.3 264.8 L1122.8 263.6 L1123.3 265.6 L1123.8 264.8 L1124.3 263.6 L1124.8 262.9 L1125.3 264.7 L1125.8 264.3 L1126.3 263.2 L1126.8 263.3 L1127.3 265.8 L1127.8 259.1 L1128.3 263.5 L1128.8 263.3 L1129.3 264.5 L1129.8 259.0 L1130.3 259.0 L1130.8 264.6 L1131.3 265.9 L1131.8 261.6 L1132.3 262.8 L1132.8 263.8 L1133.3 265.1 L1133.8 265.3 L1134.3 265.7 L1134.8 265.5 L1135.3 264.6 L1135.8 266.0 L1136.3 265.1 L1136.8 263.0 L1137.3 264.3 L1137.8 264.7 L1138.3 264.9 L1138.8 264.9 L1139.3 264.9 L1139.8 265.7 L1140.3 263.7 L1140.8 265.5 L1141.3 263.3 L1141.8 264.1 L1142.3 265.5 L1142.8 262.8 L1143.3 252.2 L1143.8 232.5 L1144.3 232.5 L1144.8 252.2 L1145.3 263.4 L1145.8 265.1 L1146.3 265.0 L1146.8 264.0 L1147.3 265.8 L1147.8 264.8 L1148.3 265.6 L1148.8 264.8 L1149.3 264.8 L1149.8 265.9 L1150.3 263.8 L1150.8 263.0 L1151.3 260.8 L1151.8 263.3 L1152.3 263.2 L1152.8 265.0 L1153.3 263.0 L1153.8 265.1 L1154.3 264.5 L1154.8 255.0 L1155.3 238.0 L1155.8 238.0 L1156.3 241.0 L1156.8 241.0 L1157.3 256.5 L1157.8 264.3 L1158.3 265.7 L1158.8 264.7 L1159.3 262.8 L1159.8 263.8 L1160.3 265.1 L1160.8 263.4 L1161.3 264.1 L1161.8 264.8 L1162.3 264.7 L1162.8 265.4 L1163.3 265.7 L1163.8 263.1 L1164.3 263.0 L1164.8 263.1 L1165.3 265.0 L1165.8 264.4 L1166.3 263.3 L1166.8 264.4 L1167.3 263.4 L1167.8 263.0 L1168.3 265.2 L1168.8 264.1 L1169.3 265.5 L1169.8 264.0 L1170.3 262.8 L1170.8 265.5 L1171.3 264.4 L1171.8 265.7 L1172.3 264.0 L1172.8 265.2 L1173.3 262.9 L1173.8 264.8 L1174.3 264.9 L1174.8 258.0 L1175.3 258.0 L1175.8 265.0 L1176.3 263.3 L1176.8 265.7 L1177.3 264.6 L1177.8 263.0 L1178.3 265.8 L1178.8 264.3 L1179.3 264.1 L1179.8 263.6 L1180.3 265.1 L1180.8 262.8 L1181.3 265.7 L1181.8 265.8 L1182.3 264.3 L1182.8 265.8 L1183.3 265.4 L1183.8 264.2 L1184.3 263.1 L1184.8 263.6 L1185.3 264.5 L1185.8 263.5 L1186.3 264.8 L1186.8 264.6 L1187.3 263.3 L1187.8 263.9 L1188.3 264.8 L1188.8 263.0 L1189.3 263.9 L1189.8 265.2 L1190.3 265.4 L1190.8 264.1 L1191.3 264.9 L1191.8 265.2 L1192.3 263.0 L1192.8 264.6 L1193.3 265.3 L1193.8 263.0 L1194.3 263.6 L1194.8 263.9 L1195.3 256.5 L1195.8 241.0 L1196.3 241.0 L1196.8 256.5 L1197.3 263.3 L1197.8 265.5 L1198.3 265.6 L1198.8 264.5 L1199.3 265.4 L1199.8 263.0 L1200.3 263.0 L1200.8 264.8 L1201.3 264.4 L1201.8 265.9 L1202.3 265.1 L1202.8 265.4 L1203.3 265.5 L1203.8 264.4 L1204.3 264.1 L1204.8 263.9 L1205.3 263.7 L1205.8 263.1 L1206.3 262.9 L1206.8 262.8 L1207.3 263.5 L1207.8 263.3 L1208.3 263.7 L1208.8 263.6 L1209.3 264.5 L1209.8 262.9 L1210.3 264.4 L1210.8 264.9 L1211.3 263.9 L1211.8 263.2 L1212.3 265.6 L1212.8 263.6 L1213.3 262.7 L1213.8 263.0 L1214.3 264.3 L1214.8 259.0 L1215.3 259.0 L1215.8 264.5 L1216.3 263.7 L1216.8 264.2 L1217.3 263.0 L1217.8 265.4 L1218.3 265.0 L1218.8 262.7 L1219.3 264.7 L1219.8 263.7 L1220.3 263.5 L1220.8 265.8 L1221.3 265.4 L1221.8 264.9 L1222.3 265.5 L1222.8 263.2 L1223.3 265.7 L1223.8 265.2 L1224.3 261.6 L1224.8 265.3 L1225.3 263.8 L1225.8 264.4 L1226.3 263.2 L1226.8 263.9 L1227.3 266.0 L1227.8 263.4 L1228.3 263.0 L1228.8 263.8 L1229.3 263.1 L1229.8 264.5 L1230.3 265.7 L1230.8 263.1 L1231.3 263.5 L1231.8 264.5 L1232.3 266.0 L1232.8 264.9 L1233.3 263.4 L1233.8 264.0 L1234.3 263.6 L1234.8 262.8 L1235.3 264.7 L1235.8 265.0 L1236.3 266.0 L1236.8 264.1 L1237.3 264.4 L1237.8 262.9 L1238.3 264.7 L1238.8 262.9 L1239.3 260.8 L1239.8 263.7 L1240.3 265.7 L1240.8 220.7 L1241.3 219.7 L1241.8 220.3 L1242.3 220.5 L1242.8 220.9 L1243.3 222.2 L1243.8 219.9 L1244.3 220.0 L1244.8 222.1 L1245.3 222.2 L1245.8 220.0 L1246.3 221.4 L1246.8 222.2 L1247.3 220.7 L1247.3 246.3 L1246.8 246.6 L1246.3 247.6 L1245.8 251.5 L1245.3 248.2 L1244.8 246.9 L1244.3 251.1 L1243.8 247.4 L1243.3 248.5 L1242.8 254.1 L1242.3 252.3 L1241.8 251.7 L1241.3 257.1 L1240.8 250.0 L1240.3 278.7 L1239.8 277.9 L1239.3 278.5 L1238.8 278.3 L1238.3 278.0 L1237.8 279.2 L1237.3 279.2 L1236.8 279.2 L1236.3 279.1 L1235.8 278.9 L1235.3 278.2 L1234.8 277.7 L1234.3 278.1 L1233.8 277.7 L1233.3 278.3 L1232.8 278.2 L1232.3 278.7 L1231.8 277.5 L1231.3 279.1 L1230.8 278.0 L1230.3 279.0 L1229.8 278.5 L1229.3 277.7 L1228.8 278.1 L1228.3 278.6 L1227.8 278.7 L1227.3 278.8 L1226.8 277.7 L1226.3 279.2 L1225.8 279.1 L1225.3 277.6 L1224.8 279.6 L1224.3 278.8 L1223.8 278.2 L1223.3 278.4 L1222.8 278.2 L1222.3 277.6 L1221.8 277.8 L1221.3 277.7 L1220.8 278.8 L1220.3 278.9 L1219.8 278.2 L1219.3 278.2 L1218.8 279.0 L1218.3 278.5 L1217.8 277.4 L1217.3 278.3 L1216.8 278.1 L1216.3 277.6 L1215.8 277.7 L1215.3 279.1 L1214.8 279.0 L1214.3 279.3 L1213.8 278.8 L1213.3 279.1 L1212.8 277.7 L1212.3 278.7 L1211.8 278.0 L1211.3 278.8 L1210.8 277.4 L1210.3 277.9 L1209.8 279.0 L1209.3 278.4 L1208.8 279.2 L1208.3 279.0 L1207.8 277.7 L1207.3 278.6 L1206.8 277.8 L1206.3 278.6 L1205.8 279.0 L1205.3 277.5 L1204.8 277.8 L1204.3 278.9 L1203.8 279.0 L1203.3 279.3 L1202.8 279.1 L1202.3 279.2 L1201.8 278.4 L1201.3 278.2 L1200.8 277.8 L1200.3 277.7 L1199.8 278.9 L1199.3 278.5 L1198.8 279.3 L1198.3 277.4 L1197.8 277.8 L1197.3 279.0 L1196.8 278.2 L1196.3 277.9 L1195.8 278.0 L1195.3 279.2 L1194.8 278.8 L1194.3 278.1 L1193.8 278.8 L1193.3 277.8 L1192.8 278.8 L1192.3 277.6 L1191.8 278.3 L1191.3 278.1 L1190.8 279.0 L1190.3 278.9 L1189.8 277.5 L1189.3 277.8 L1188.8 278.5 L1188.3 278.5 L1187.8 277.9 L1187.3 279.4 L1186.8 278.7 L1186.3 277.9 L1185.8 279.2 L1185.3 279.3 L1184.8 278.2 L1184.3 278.7 L1183.8 277.5 L1183.3 277.6 L1182.8 278.3 L1182.3 277.9 L1181.8 279.2 L1181.3 277.5 L1180.8 278.9 L1180.3 277.4 L1179.8 278.5 L1179.3 278.6 L1178.8 277.5 L1178.3 278.3 L1177.8 278.9 L1177.3 278.7 L1176.8 278.4 L1176.3 277.6 L1175.8 278.2 L1175.3 280.8 L1174.8 279.4 L1174.3 278.7 L1173.8 277.9 L1173.3 279.4 L1172.8 278.2 L1172.3 279.2 L1171.8 279.0 L1171.3 279.0 L1170.8 278.2 L1170.3 279.0 L1169.8 277.7 L1169.3 278.3 L1168.8 277.4 L1168.3 278.3 L1167.8 279.3 L1167.3 279.4 L1166.8 277.7 L1166.3 278.9 L1165.8 278.4 L1165.3 279.3 L1164.8 279.6 L1164.3 278.2 L1163.8 278.9 L1163.3 279.4 L1162.8 278.0 L1162.3 277.9 L1161.8 278.5 L1161.3 277.7 L1160.8 278.3 L1160.3 278.4 L1159.8 278.6 L1159.3 277.9 L1158.8 277.7 L1158.3 278.0 L1157.8 278.3 L1157.3 279.2 L1156.8 277.5 L1156.3 279.0 L1155.8 277.5 L1155.3 277.8 L1154.8 279.1 L1154.3 278.2 L1153.8 278.4 L1153.3 278.5 L1152.8 278.4 L1152.3 278.8 L1151.8 279.0 L1151.3 277.5 L1150.8 278.5 L1150.3 279.1 L1149.8 278.5 L1149.3 277.8 L1148.8 278.8 L1148.3 279.3 L1147.8 278.2 L1147.3 277.7 L1146.8 279.2 L1146.3 278.6 L1145.8 277.9 L1145.3 279.0 L1144.8 279.3 L1144.3 278.3 L1143.8 277.9 L1143.3 279.7 L1142.8 277.5 L1142.3 278.3 L1141.8 278.4 L1141.3 278.0 L1140.8 279.3 L1140.3 278.4 L1139.8 278.2 L1139.3 278.3 L1138.8 279.2 L1138.3 277.7 L1137.8 278.9 L1137.3 278.8 L1136.8 277.5 L1136.3 278.3 L1135.8 278.9 L1135.3 277.6 L1134.8 278.6 L1134.3 278.2 L1133.8 278.1 L1133.3 278.9 L1132.8 277.6 L1132.3 278.4 L1131.8 279.2 L1131.3 278.8 L1130.8 278.1 L1130.3 277.8 L1129.8 277.4 L1129.3 278.6 L1128.8 277.5 L1128.3 278.6 L1127.8 277.9 L1127.3 278.6 L1126.8 279.3 L1126.3 279.0 L1125.8 279.1 L1125.3 278.3 L1124.8 278.6 L1124.3 278.1 L1123.8 279.4 L1123.3 278.2 L1122.8 279.0 L1122.3 278.2 L1121.8 278.9 L1121.3 277.8 L1120.8 277.6 L1120.3 277.6 L1119.8 277.5 L1119.3 279.2 L1118.8 279.3 L1118.3 278.9 L1117.8 278.0 L1117.3 279.4 L1116.8 278.4 L1116.3 278.3 L1115.8 277.5 L1115.3 278.7 L1114.8 278.8 L1114.3 277.6 L1113.8 277.8 L1113.3 279.2 Z" fill="#8e8f5c"/><path d="M1277.8 215.0 L1278.3 213.4 L1278.8 216.0 L1279.3 260.9 L1279.8 263.1 L1280.3 264.3 L1280.8 265.5 L1281.3 265.2 L1281.8 264.5 L1282.3 263.1 L1282.8 263.1 L1283.3 263.2 L1283.8 264.3 L1284.3 262.9 L1284.8 263.3 L1285.3 265.6 L1285.8 261.1 L1286.3 263.6 L1286.8 264.2 L1287.3 262.8 L1287.8 263.9 L1288.3 262.7 L1288.8 265.4 L1289.3 265.4 L1289.8 263.0 L1290.3 263.5 L1290.8 263.4 L1291.3 265.4 L1291.8 263.6 L1292.3 263.8 L1292.8 264.5 L1293.3 263.2 L1293.8 264.0 L1294.3 263.4 L1294.8 263.1 L1295.3 263.4 L1295.8 263.6 L1296.3 263.3 L1296.8 264.8 L1297.3 264.7 L1297.8 264.4 L1298.3 265.0 L1298.8 264.0 L1299.3 261.3 L1299.8 258.0 L1300.3 258.0 L1300.8 265.0 L1301.3 266.0 L1301.8 264.8 L1302.3 264.4 L1302.8 265.0 L1303.3 264.5 L1303.8 264.8 L1304.3 264.3 L1304.8 265.2 L1305.3 263.2 L1305.8 265.6 L1306.3 264.0 L1306.8 262.9 L1307.3 265.6 L1307.8 261.8 L1308.3 263.6 L1308.8 263.1 L1309.3 263.1 L1309.8 263.3 L1310.3 263.9 L1310.8 264.8 L1311.3 264.2 L1311.8 265.0 L1312.3 265.6 L1312.8 264.2 L1313.3 264.7 L1313.8 263.6 L1314.3 265.0 L1314.8 263.1 L1315.3 263.8 L1315.8 264.5 L1316.3 263.9 L1316.8 263.8 L1317.3 264.2 L1317.8 264.9 L1318.3 266.0 L1318.8 265.0 L1319.3 264.0 L1319.8 263.4 L1320.3 265.1 L1320.8 264.8 L1321.3 265.1 L1321.8 262.8 L1322.3 262.8 L1322.8 263.1 L1323.3 263.1 L1323.8 264.4 L1324.3 262.0 L1324.8 264.2 L1325.3 263.2 L1325.8 264.7 L1326.3 262.7 L1326.8 265.1 L1327.3 263.7 L1327.8 262.9 L1328.3 263.1 L1328.8 264.9 L1329.3 264.4 L1329.8 259.0 L1330.3 259.0 L1330.8 262.9 L1331.3 264.5 L1331.8 263.9 L1332.3 265.2 L1332.8 262.9 L1333.3 264.7 L1333.8 264.6 L1334.3 263.5 L1334.8 265.3 L1335.3 263.6 L1335.8 265.4 L1336.3 265.3 L1336.8 262.9 L1337.3 261.0 L1337.8 262.7 L1338.3 265.9 L1338.8 264.2 L1339.3 264.1 L1339.8 262.9 L1340.3 264.5 L1340.8 265.8 L1341.3 264.1 L1341.8 265.6 L1342.3 263.9 L1342.8 265.0 L1343.3 265.1 L1343.8 263.8 L1344.3 264.4 L1344.8 263.9 L1345.3 263.8 L1345.8 265.1 L1346.3 265.4 L1346.8 264.7 L1347.3 264.2 L1347.8 263.0 L1348.3 264.6 L1348.8 265.8 L1349.3 265.3 L1349.8 264.7 L1350.3 265.7 L1350.8 265.8 L1351.3 265.1 L1351.8 263.5 L1352.3 264.3 L1352.8 264.4 L1353.3 265.5 L1353.8 264.5 L1354.3 259.7 L1354.8 263.5 L1355.3 265.8 L1355.8 263.5 L1356.3 264.9 L1356.8 264.6 L1357.3 265.6 L1357.8 262.8 L1358.3 265.5 L1358.8 264.4 L1359.3 255.5 L1359.8 239.0 L1360.3 239.0 L1360.8 255.5 L1361.3 265.8 L1361.8 256.5 L1362.3 241.0 L1362.8 241.0 L1363.3 256.5 L1363.8 265.0 L1364.3 263.7 L1364.8 265.5 L1365.3 262.7 L1365.8 264.4 L1366.3 263.5 L1366.8 263.5 L1367.3 263.5 L1367.8 263.5 L1368.3 263.7 L1368.8 265.3 L1369.3 263.5 L1369.8 263.9 L1370.3 264.0 L1370.8 263.8 L1371.3 264.7 L1371.8 262.7 L1372.3 265.7 L1372.8 265.9 L1373.3 263.2 L1373.8 263.1 L1374.3 265.8 L1374.8 263.6 L1375.3 261.6 L1375.8 264.4 L1376.3 264.4 L1376.8 263.0 L1377.3 264.4 L1377.8 263.7 L1378.3 264.7 L1378.8 265.8 L1379.3 262.1 L1379.8 261.3 L1380.3 264.9 L1380.8 262.8 L1381.3 264.3 L1381.8 265.6 L1382.3 264.2 L1382.8 265.8 L1383.3 264.4 L1383.8 265.1 L1384.3 265.0 L1384.8 258.0 L1385.3 258.0 L1385.8 263.6 L1386.3 263.0 L1386.8 265.9 L1387.3 265.3 L1387.8 263.5 L1388.3 264.5 L1388.8 263.7 L1389.3 263.3 L1389.8 265.9 L1390.3 265.0 L1390.8 265.4 L1391.3 262.8 L1391.8 264.7 L1392.3 262.9 L1392.8 265.6 L1393.3 265.2 L1393.8 261.4 L1394.3 265.6 L1394.8 264.3 L1395.3 265.3 L1395.8 265.0 L1396.3 263.3 L1396.8 263.8 L1397.3 265.8 L1397.8 263.8 L1398.3 262.8 L1398.8 265.2 L1399.3 263.5 L1399.8 263.9 L1400.3 264.1 L1400.8 265.9 L1401.3 265.2 L1401.8 265.7 L1402.3 264.4 L1402.8 263.2 L1403.3 265.1 L1403.8 265.0 L1404.3 264.3 L1404.8 262.9 L1405.3 263.1 L1405.8 264.0 L1406.3 221.5 L1406.8 221.5 L1407.3 221.7 L1407.8 223.2 L1408.3 222.3 L1408.8 220.6 L1409.3 220.2 L1409.8 220.7 L1410.3 220.8 L1410.8 220.6 L1411.3 220.8 L1411.8 220.8 L1412.3 222.3 L1412.8 221.4 L1413.3 222.2 L1413.8 220.7 L1414.3 221.0 L1414.8 221.5 L1415.3 221.7 L1415.8 220.1 L1416.3 220.0 L1416.8 221.9 L1417.3 221.2 L1417.8 221.6 L1418.3 221.1 L1418.8 219.8 L1419.3 221.6 L1419.8 221.0 L1420.3 222.1 L1420.8 220.7 L1421.3 220.8 L1421.8 221.1 L1422.3 221.7 L1422.8 221.5 L1423.3 220.5 L1423.8 221.0 L1424.3 221.4 L1424.8 222.0 L1425.3 219.8 L1425.8 221.6 L1426.3 221.5 L1426.8 222.0 L1427.3 221.5 L1427.8 220.1 L1428.3 220.7 L1428.8 221.2 L1429.3 221.3 L1429.8 220.4 L1430.3 221.9 L1430.8 219.9 L1431.3 220.0 L1431.8 220.1 L1432.3 219.5 L1432.8 221.0 L1433.3 220.5 L1433.8 222.0 L1434.3 221.5 L1434.8 221.5 L1435.3 220.3 L1435.8 220.5 L1436.3 219.4 L1436.8 220.2 L1437.3 220.8 L1437.8 222.1 L1438.3 221.4 L1438.8 220.6 L1439.3 220.8 L1439.8 221.8 L1440.3 220.3 L1440.8 221.3 L1441.3 221.9 L1441.8 221.6 L1442.3 221.1 L1442.8 222.2 L1443.3 222.3 L1443.8 220.3 L1444.3 222.4 L1444.8 219.4 L1445.3 221.3 L1445.8 265.8 L1446.3 264.6 L1446.8 264.9 L1447.3 263.8 L1447.8 264.9 L1448.3 263.8 L1448.8 264.8 L1449.3 263.6 L1449.8 261.5 L1450.3 263.8 L1450.8 264.8 L1451.3 264.6 L1451.8 265.1 L1452.3 263.5 L1452.8 262.9 L1453.3 265.5 L1453.8 264.8 L1454.3 262.9 L1454.8 258.9 L1455.3 263.2 L1455.8 264.4 L1456.3 263.5 L1456.8 263.6 L1457.3 264.7 L1457.8 262.9 L1458.3 259.1 L1458.8 262.9 L1459.3 262.8 L1459.8 263.1 L1460.3 263.3 L1460.8 264.6 L1461.3 262.8 L1461.8 262.7 L1462.3 264.5 L1462.8 265.0 L1463.3 251.5 L1463.8 231.0 L1464.3 231.0 L1464.8 234.0 L1465.3 234.0 L1465.8 253.0 L1466.3 265.9 L1466.8 263.1 L1467.3 263.6 L1467.8 264.2 L1468.3 263.9 L1468.8 263.4 L1469.3 262.7 L1469.8 264.8 L1470.3 264.3 L1470.8 264.1 L1471.3 265.1 L1471.8 265.3 L1472.3 260.7 L1472.8 264.6 L1473.3 260.4 L1473.8 264.5 L1474.3 262.7 L1474.8 262.9 L1475.3 265.4 L1475.8 265.1 L1476.3 265.5 L1476.8 265.3 L1477.3 263.6 L1477.8 262.9 L1478.3 266.0 L1478.8 264.4 L1479.3 264.3 L1479.8 258.0 L1480.3 258.0 L1480.8 265.0 L1481.3 265.6 L1481.8 264.3 L1482.3 265.2 L1482.8 264.2 L1483.3 263.8 L1483.8 262.8 L1484.3 265.3 L1484.8 264.3 L1485.3 264.8 L1485.8 264.7 L1486.3 262.6 L1486.8 265.8 L1487.3 263.7 L1487.8 263.8 L1488.3 264.2 L1488.8 265.4 L1489.3 263.9 L1489.8 263.1 L1490.3 265.2 L1490.8 264.0 L1491.3 263.9 L1491.8 265.5 L1492.3 264.0 L1492.8 263.0 L1493.3 263.9 L1493.8 265.6 L1494.3 263.4 L1494.8 263.4 L1495.3 262.0 L1495.8 263.3 L1496.3 262.1 L1496.8 262.8 L1497.3 257.0 L1497.8 242.0 L1498.3 242.0 L1498.8 257.0 L1499.3 265.2 L1499.8 264.9 L1500.3 264.4 L1500.8 265.3 L1501.3 262.9 L1501.8 264.1 L1502.3 265.3 L1502.8 262.7 L1503.3 262.9 L1503.8 264.9 L1504.3 264.2 L1504.8 263.2 L1505.3 262.7 L1505.8 263.2 L1506.3 265.2 L1506.8 263.1 L1507.3 265.7 L1507.8 263.5 L1508.3 264.1 L1508.8 264.2 L1509.3 264.6 L1509.8 262.2 L1510.3 263.2 L1510.8 263.2 L1511.3 263.3 L1511.8 263.5 L1512.3 263.3 L1512.8 263.7 L1513.3 265.3 L1513.8 264.7 L1514.3 266.0 L1514.8 263.7 L1515.3 263.4 L1515.8 262.9 L1516.3 265.8 L1516.8 263.5 L1517.3 260.4 L1517.8 264.6 L1518.3 263.8 L1518.8 262.9 L1519.3 262.8 L1519.8 263.9 L1520.3 265.3 L1520.8 265.2 L1521.3 251.0 L1521.8 230.0 L1522.3 230.0 L1522.8 251.0 L1523.3 263.2 L1523.8 264.3 L1524.3 262.7 L1524.8 265.3 L1525.3 265.1 L1525.8 262.8 L1526.3 265.6 L1526.8 263.6 L1527.3 264.1 L1527.8 265.8 L1528.3 263.5 L1528.8 264.7 L1529.3 262.8 L1529.8 263.4 L1530.3 265.7 L1530.8 265.9 L1531.3 265.2 L1531.8 264.9 L1532.3 265.9 L1532.8 265.8 L1533.3 265.4 L1533.8 265.5 L1534.3 265.1 L1534.8 264.2 L1535.3 263.9 L1535.8 265.1 L1536.3 264.2 L1536.8 262.7 L1537.3 263.4 L1537.8 261.3 L1538.3 264.7 L1538.8 261.7 L1539.3 264.7 L1539.8 258.0 L1540.3 258.0 L1540.8 262.7 L1541.3 264.7 L1541.8 264.2 L1542.3 263.9 L1542.8 265.0 L1543.3 263.1 L1543.8 263.8 L1544.3 261.2 L1544.8 264.3 L1545.3 262.9 L1545.8 265.2 L1546.3 263.3 L1546.8 266.0 L1547.3 264.8 L1547.8 264.4 L1548.3 262.9 L1548.8 263.7 L1549.3 265.7 L1549.8 263.5 L1550.3 262.9 L1550.8 265.1 L1551.3 262.9 L1551.8 260.9 L1552.3 265.8 L1552.8 265.0 L1553.3 264.1 L1553.8 265.6 L1554.3 259.4 L1554.8 264.6 L1555.3 264.7 L1555.8 263.5 L1556.3 264.1 L1556.8 265.4 L1557.3 262.3 L1557.8 265.4 L1558.3 265.9 L1558.8 262.9 L1559.3 260.0 L1559.8 263.9 L1560.3 264.9 L1560.8 264.2 L1561.3 263.5 L1561.8 264.5 L1562.3 263.4 L1562.8 264.5 L1563.3 262.9 L1563.8 265.6 L1564.3 265.1 L1564.8 263.0 L1565.3 263.1 L1565.8 264.7 L1566.3 263.2 L1566.8 262.8 L1567.3 264.3 L1567.8 265.4 L1568.3 265.2 L1568.8 264.1 L1569.3 265.6 L1569.8 262.9 L1570.3 263.2 L1570.8 263.0 L1571.3 265.5 L1571.8 265.3 L1572.3 264.2 L1572.8 222.7 L1573.3 224.0 L1573.8 223.2 L1574.3 222.0 L1574.8 223.2 L1575.3 222.2 L1575.8 219.5 L1576.3 219.9 L1576.8 220.1 L1577.3 221.6 L1577.8 220.3 L1578.3 221.4 L1578.8 222.3 L1579.3 220.3 L1579.8 220.1 L1580.3 219.8 L1580.8 222.2 L1581.3 222.3 L1581.8 221.3 L1582.3 220.5 L1582.8 222.0 L1583.3 220.5 L1583.8 221.0 L1584.3 221.1 L1584.8 221.1 L1585.3 222.1 L1585.8 221.0 L1586.3 219.7 L1586.8 220.0 L1587.3 219.9 L1587.8 221.3 L1588.3 220.3 L1588.8 220.0 L1589.3 222.3 L1589.8 221.7 L1590.3 220.7 L1590.8 220.0 L1591.3 220.9 L1591.8 220.6 L1592.3 221.6 L1592.8 220.7 L1593.3 221.3 L1593.8 221.1 L1594.3 221.5 L1594.8 220.8 L1595.3 220.5 L1595.8 219.9 L1596.3 222.4 L1596.8 219.4 L1597.3 220.7 L1597.8 219.9 L1598.3 222.0 L1598.8 220.8 L1599.3 221.2 L1599.8 221.2 L1600.3 222.0 L1600.8 220.9 L1601.3 220.7 L1601.8 220.2 L1602.3 221.8 L1602.8 221.0 L1603.3 220.7 L1603.8 220.2 L1604.3 220.6 L1604.8 221.0 L1605.3 221.6 L1605.8 219.4 L1606.3 220.2 L1606.8 221.9 L1607.3 219.6 L1607.8 222.3 L1608.3 221.2 L1608.8 220.1 L1609.3 219.7 L1609.8 220.0 L1610.3 220.2 L1610.8 220.0 L1611.3 220.1 L1611.8 221.7 L1612.3 266.0 L1612.8 263.0 L1613.3 264.5 L1613.8 264.2 L1614.3 264.8 L1614.8 265.5 L1615.3 263.0 L1615.8 264.6 L1616.3 265.4 L1616.8 264.3 L1617.3 265.7 L1617.8 263.9 L1618.3 264.4 L1618.8 264.0 L1619.3 265.0 L1619.8 263.0 L1620.3 265.8 L1620.8 264.8 L1621.3 262.8 L1621.8 262.7 L1622.3 265.2 L1622.8 265.2 L1623.3 264.7 L1623.8 263.3 L1624.3 264.8 L1624.8 265.5 L1625.3 265.4 L1625.8 263.5 L1626.3 264.7 L1626.8 263.5 L1627.3 263.8 L1627.8 264.8 L1628.3 265.1 L1628.8 264.8 L1629.3 264.5 L1629.8 257.0 L1630.3 257.0 L1630.8 262.9 L1631.3 265.4 L1631.8 263.0 L1632.3 263.7 L1632.8 262.9 L1633.3 264.1 L1633.8 265.6 L1634.3 264.7 L1634.8 265.8 L1635.3 264.8 L1635.8 264.3 L1636.3 263.2 L1636.8 265.1 L1637.3 264.9 L1637.8 265.5 L1638.3 263.3 L1638.8 263.9 L1639.3 264.0 L1639.8 265.1 L1640.3 265.0 L1640.8 264.1 L1641.3 263.8 L1641.8 262.9 L1642.3 264.8 L1642.8 264.7 L1643.3 263.6 L1643.8 263.5 L1644.3 263.0 L1644.8 265.0 L1645.3 263.3 L1645.8 260.3 L1646.3 263.0 L1646.8 264.3 L1647.3 264.4 L1647.8 264.0 L1648.3 264.5 L1648.8 265.8 L1649.3 264.0 L1649.8 256.0 L1650.3 256.0 L1650.8 264.0 L1651.3 262.7 L1651.8 265.6 L1652.3 264.9 L1652.8 264.0 L1653.3 263.4 L1653.8 262.9 L1654.3 264.3 L1654.8 265.2 L1655.3 262.5 L1655.8 265.1 L1656.3 263.0 L1656.8 264.3 L1657.3 263.4 L1657.8 265.4 L1658.3 263.3 L1658.8 263.6 L1659.3 264.8 L1659.8 264.1 L1660.3 264.2 L1660.8 262.9 L1661.3 263.1 L1661.8 264.8 L1662.3 265.1 L1662.8 265.5 L1663.3 265.5 L1663.8 263.2 L1664.3 262.8 L1664.8 263.6 L1665.3 265.7 L1665.8 264.8 L1666.3 265.9 L1666.8 265.3 L1667.3 265.7 L1667.8 264.7 L1668.3 265.2 L1668.8 263.4 L1669.3 264.5 L1669.8 265.2 L1670.3 263.6 L1670.8 260.7 L1671.3 264.7 L1671.8 264.4 L1672.3 264.3 L1672.8 263.6 L1673.3 263.0 L1673.8 254.0 L1674.3 254.0 L1674.8 263.0 L1675.3 265.7 L1675.8 262.0 L1676.3 262.7 L1676.8 264.2 L1677.3 261.0 L1677.8 263.0 L1678.3 265.8 L1678.8 265.3 L1679.3 264.6 L1679.8 264.1 L1680.3 265.2 L1680.8 263.4 L1681.3 263.9 L1681.8 264.7 L1682.3 263.9 L1682.8 261.4 L1683.3 264.4 L1683.8 263.7 L1684.3 264.2 L1684.8 263.0 L1685.3 262.9 L1685.8 255.0 L1686.3 255.0 L1686.8 263.5 L1687.3 263.7 L1687.8 264.5 L1688.3 262.9 L1688.8 265.9 L1689.3 262.7 L1689.8 262.9 L1690.3 264.3 L1690.8 264.3 L1691.3 265.3 L1691.8 263.3 L1692.3 263.5 L1692.8 265.7 L1693.3 265.0 L1693.8 264.5 L1694.3 263.3 L1694.8 262.8 L1695.3 264.9 L1695.8 265.9 L1696.3 264.7 L1696.8 265.6 L1697.3 265.4 L1697.8 263.5 L1698.3 264.3 L1698.8 265.6 L1699.3 263.7 L1699.8 263.7 L1700.3 263.0 L1700.8 265.1 L1701.3 263.6 L1701.8 256.0 L1702.3 256.0 L1702.8 261.7 L1703.3 263.8 L1703.8 263.0 L1704.3 263.3 L1704.8 262.9 L1705.3 263.0 L1705.8 263.8 L1706.3 265.8 L1706.8 264.7 L1707.3 264.7 L1707.8 264.1 L1708.3 265.0 L1708.8 263.1 L1709.3 265.2 L1709.8 263.1 L1710.3 264.2 L1710.8 263.8 L1711.3 263.9 L1711.8 265.5 L1712.3 264.6 L1712.8 263.0 L1713.3 263.8 L1713.8 263.5 L1714.3 265.0 L1714.8 263.7 L1715.3 264.0 L1715.8 262.7 L1716.3 263.4 L1716.8 263.1 L1717.3 263.5 L1717.8 255.0 L1718.3 255.0 L1718.8 263.5 L1719.3 262.7 L1719.8 265.1 L1720.3 263.7 L1720.8 264.4 L1721.3 265.5 L1721.8 262.9 L1722.3 265.4 L1722.8 265.2 L1723.3 264.6 L1723.8 265.2 L1724.3 265.2 L1724.8 263.3 L1725.3 265.6 L1725.8 265.1 L1726.3 265.4 L1726.8 264.6 L1727.3 265.3 L1727.8 265.4 L1728.3 264.2 L1728.8 263.3 L1729.3 263.0 L1729.8 254.0 L1730.3 254.0 L1730.8 263.0 L1731.3 263.8 L1731.8 260.0 L1732.3 264.4 L1732.8 263.5 L1733.3 264.1 L1733.8 264.5 L1734.3 263.9 L1734.8 264.6 L1735.3 265.6 L1735.8 263.5 L1736.3 265.6 L1736.8 265.5 L1737.3 265.8 L1737.8 263.0 L1738.3 264.9 L1738.8 263.0 L1739.3 223.8 L1739.8 222.3 L1740.3 221.5 L1740.8 222.2 L1741.3 222.9 L1741.8 220.3 L1742.3 219.7 L1742.8 222.4 L1743.3 221.6 L1743.8 219.5 L1744.3 219.8 L1744.8 220.1 L1745.3 222.4 L1745.8 222.0 L1746.3 222.3 L1746.8 220.4 L1747.3 222.1 L1747.8 221.8 L1748.3 221.1 L1748.8 219.5 L1749.3 221.5 L1749.8 221.7 L1750.3 222.0 L1750.8 220.7 L1751.3 220.3 L1751.8 221.8 L1752.3 219.7 L1752.8 221.8 L1753.3 222.0 L1753.8 221.9 L1754.3 222.0 L1754.8 221.5 L1755.3 221.7 L1755.8 221.3 L1756.3 220.0 L1756.8 219.8 L1757.3 222.1 L1757.8 220.1 L1758.3 222.1 L1758.8 219.5 L1759.3 220.4 L1759.8 219.6 L1760.3 221.8 L1760.8 221.8 L1761.3 220.6 L1761.8 220.1 L1762.3 221.7 L1762.8 220.7 L1763.3 221.5 L1763.8 221.9 L1764.3 220.2 L1764.8 222.0 L1765.3 220.5 L1765.8 222.3 L1766.3 221.5 L1766.8 220.7 L1767.3 220.0 L1767.8 220.9 L1768.3 221.7 L1768.8 219.8 L1769.3 220.8 L1769.8 221.0 L1770.3 220.9 L1770.8 220.6 L1771.3 219.5 L1771.8 220.8 L1772.3 221.6 L1772.8 219.7 L1773.3 221.2 L1773.8 221.0 L1774.3 220.4 L1774.8 221.2 L1775.3 213.8 L1775.8 215.7 L1776.3 214.5 L1776.8 215.5 L1777.3 214.6 L1777.8 215.5 L1778.3 263.3 L1778.8 265.2 L1779.3 264.8 L1779.8 264.0 L1780.3 264.4 L1780.8 263.7 L1781.3 265.5 L1781.8 264.0 L1782.3 265.2 L1782.8 265.7 L1783.3 263.8 L1783.8 264.5 L1784.3 265.1 L1784.8 264.8 L1785.3 264.9 L1785.8 264.3 L1786.3 263.5 L1786.8 263.1 L1787.3 263.5 L1787.8 262.9 L1788.3 264.1 L1788.8 266.0 L1789.3 262.5 L1789.8 253.0 L1790.3 253.0 L1790.8 262.5 L1791.3 264.1 L1791.8 263.7 L1792.3 264.1 L1792.8 265.5 L1793.3 264.9 L1793.8 265.6 L1794.3 265.5 L1794.8 264.1 L1795.3 265.7 L1795.8 262.5 L1796.3 264.0 L1796.8 264.9 L1797.3 263.8 L1797.8 265.9 L1798.3 262.7 L1798.8 264.6 L1799.3 262.8 L1799.8 265.1 L1800.3 263.5 L1800.8 263.7 L1801.3 264.6 L1801.8 262.7 L1802.3 265.2 L1802.8 265.6 L1803.3 265.6 L1803.8 256.5 L1804.3 241.0 L1804.8 241.0 L1805.3 246.0 L1805.8 246.0 L1806.3 259.0 L1806.8 264.1 L1807.3 263.9 L1807.8 263.6 L1808.3 263.0 L1808.8 264.5 L1809.3 264.1 L1809.8 263.6 L1810.3 263.6 L1810.8 263.5 L1811.3 264.3 L1811.8 264.0 L1812.3 265.3 L1812.8 263.6 L1813.3 265.4 L1813.8 263.1 L1814.3 265.6 L1814.8 265.1 L1815.3 263.3 L1815.8 262.7 L1816.3 262.7 L1816.8 265.2 L1817.3 265.1 L1817.8 264.0 L1818.3 265.3 L1818.8 263.3 L1819.3 265.7 L1819.8 265.8 L1820.3 264.9 L1820.8 263.2 L1821.3 263.0 L1821.8 254.0 L1822.3 254.0 L1822.8 262.8 L1823.3 262.8 L1823.8 263.9 L1824.3 262.8 L1824.8 266.0 L1825.3 264.4 L1825.8 263.5 L1826.3 265.4 L1826.8 264.9 L1827.3 265.5 L1827.8 262.0 L1828.3 265.1 L1828.8 264.3 L1829.3 263.2 L1829.8 263.9 L1830.3 263.6 L1830.8 266.0 L1831.3 265.7 L1831.8 262.8 L1832.3 264.8 L1832.8 264.5 L1833.3 263.9 L1833.8 263.3 L1834.3 263.8 L1834.8 265.8 L1835.3 265.8 L1835.8 262.8 L1836.3 263.3 L1836.8 263.6 L1837.3 265.8 L1837.8 263.8 L1838.3 263.1 L1838.8 265.8 L1839.3 263.5 L1839.8 265.1 L1840.3 265.8 L1840.8 265.7 L1841.3 265.8 L1841.8 264.5 L1842.3 265.0 L1842.8 265.7 L1843.3 263.0 L1843.8 263.9 L1844.3 262.0 L1844.8 252.0 L1845.3 252.0 L1845.8 262.0 L1846.3 263.9 L1846.8 261.4 L1847.3 263.3 L1847.8 265.0 L1848.3 262.8 L1848.8 263.7 L1849.3 264.3 L1849.8 262.8 L1850.3 263.7 L1850.8 264.8 L1851.3 265.9 L1851.8 263.3 L1852.3 262.8 L1852.8 265.7 L1853.3 265.3 L1853.8 265.1 L1854.3 263.5 L1854.8 263.1 L1855.3 265.9 L1855.8 263.0 L1856.3 263.2 L1856.8 263.7 L1857.3 263.1 L1857.8 264.9 L1858.3 265.5 L1858.8 264.8 L1859.3 264.6 L1859.8 263.1 L1860.3 265.5 L1860.8 265.4 L1861.3 263.5 L1861.8 255.0 L1862.3 255.0 L1862.8 263.5 L1863.3 264.6 L1863.8 264.8 L1864.3 265.1 L1864.8 263.6 L1865.3 265.1 L1865.8 264.2 L1866.3 262.9 L1866.8 265.5 L1867.3 263.2 L1867.8 263.0 L1868.3 263.3 L1868.8 265.8 L1869.3 263.6 L1869.8 264.9 L1870.3 264.5 L1870.8 265.1 L1871.3 262.8 L1871.8 263.4 L1872.3 264.1 L1872.8 262.9 L1873.3 264.1 L1873.8 263.2 L1874.3 260.0 L1874.8 265.5 L1875.3 265.5 L1875.8 255.5 L1876.3 239.0 L1876.8 239.0 L1877.3 255.5 L1877.8 262.8 L1878.3 265.3 L1878.8 264.8 L1879.3 264.8 L1879.8 265.1 L1880.3 259.9 L1880.8 261.5 L1881.3 263.6 L1881.8 263.3 L1882.3 264.4 L1882.8 265.3 L1883.3 263.1 L1883.8 264.9 L1884.3 263.4 L1884.8 265.0 L1885.3 264.1 L1885.8 263.3 L1886.3 265.5 L1886.8 264.8 L1887.3 265.6 L1887.8 264.0 L1888.3 264.9 L1888.8 264.9 L1889.3 263.3 L1889.8 262.8 L1890.3 265.4 L1890.8 263.4 L1891.3 264.5 L1891.8 265.5 L1892.3 263.0 L1892.8 254.0 L1893.3 254.0 L1893.8 263.0 L1894.3 262.8 L1894.8 265.0 L1895.3 263.7 L1895.8 263.1 L1896.3 264.8 L1896.8 264.7 L1897.3 263.6 L1897.8 265.7 L1898.3 263.6 L1898.8 261.9 L1899.3 264.5 L1899.8 264.2 L1900.3 264.0 L1900.8 265.8 L1901.3 264.5 L1901.8 265.8 L1902.3 264.1 L1902.8 263.9 L1903.3 264.7 L1903.8 265.0 L1903.8 279.0 L1903.3 280.0 L1902.8 278.7 L1902.3 279.1 L1901.8 278.1 L1901.3 279.0 L1900.8 279.1 L1900.3 279.0 L1899.8 279.1 L1899.3 279.1 L1898.8 277.6 L1898.3 278.4 L1897.8 278.9 L1897.3 277.5 L1896.8 278.0 L1896.3 278.6 L1895.8 277.5 L1895.3 278.4 L1894.8 278.8 L1894.3 278.4 L1893.8 281.0 L1893.3 279.2 L1892.8 277.9 L1892.3 277.9 L1891.8 279.3 L1891.3 278.5 L1890.8 279.5 L1890.3 277.6 L1889.8 277.7 L1889.3 278.1 L1888.8 278.2 L1888.3 278.2 L1887.8 278.9 L1887.3 279.2 L1886.8 278.4 L1886.3 277.8 L1885.8 278.8 L1885.3 279.3 L1884.8 278.7 L1884.3 278.8 L1883.8 279.1 L1883.3 279.3 L1882.8 278.7 L1882.3 279.0 L1881.8 277.7 L1881.3 279.4 L1880.8 278.1 L1880.3 279.4 L1879.8 277.4 L1879.3 279.4 L1878.8 279.0 L1878.3 278.7 L1877.8 278.0 L1877.3 278.7 L1876.8 277.8 L1876.3 278.8 L1875.8 277.8 L1875.3 277.4 L1874.8 278.5 L1874.3 278.0 L1873.8 278.8 L1873.3 278.1 L1872.8 278.0 L1872.3 277.5 L1871.8 279.3 L1871.3 279.0 L1870.8 277.6 L1870.3 277.9 L1869.8 277.9 L1869.3 277.6 L1868.8 277.6 L1868.3 278.5 L1867.8 278.3 L1867.3 278.4 L1866.8 277.7 L1866.3 278.5 L1865.8 278.7 L1865.3 278.9 L1864.8 279.4 L1864.3 278.1 L1863.8 279.4 L1863.3 277.7 L1862.8 278.4 L1862.3 278.8 L1861.8 278.4 L1861.3 280.2 L1860.8 277.9 L1860.3 277.4 L1859.8 277.5 L1859.3 279.4 L1858.8 280.4 L1858.3 277.4 L1857.8 277.6 L1857.3 278.7 L1856.8 278.5 L1856.3 278.7 L1855.8 277.7 L1855.3 279.3 L1854.8 277.8 L1854.3 277.7 L1853.8 278.7 L1853.3 278.5 L1852.8 279.1 L1852.3 277.7 L1851.8 279.1 L1851.3 278.8 L1850.8 279.2 L1850.3 278.4 L1849.8 279.3 L1849.3 277.8 L1848.8 279.1 L1848.3 277.7 L1847.8 278.4 L1847.3 277.9 L1846.8 277.5 L1846.3 278.3 L1845.8 278.4 L1845.3 278.7 L1844.8 278.4 L1844.3 278.5 L1843.8 278.2 L1843.3 278.1 L1842.8 278.8 L1842.3 278.2 L1841.8 279.1 L1841.3 278.4 L1840.8 279.3 L1840.3 279.0 L1839.8 278.8 L1839.3 278.7 L1838.8 278.3 L1838.3 278.0 L1837.8 280.2 L1837.3 277.8 L1836.8 278.9 L1836.3 278.3 L1835.8 277.9 L1835.3 278.9 L1834.8 278.8 L1834.3 279.2 L1833.8 279.1 L1833.3 278.0 L1832.8 278.6 L1832.3 277.5 L1831.8 278.2 L1831.3 277.7 L1830.8 278.8 L1830.3 278.2 L1829.8 278.8 L1829.3 280.9 L1828.8 278.4 L1828.3 278.4 L1827.8 279.1 L1827.3 278.8 L1826.8 279.4 L1826.3 278.1 L1825.8 279.2 L1825.3 278.2 L1824.8 278.9 L1824.3 278.8 L1823.8 278.6 L1823.3 277.6 L1822.8 278.2 L1822.3 277.5 L1821.8 279.0 L1821.3 278.5 L1820.8 278.6 L1820.3 278.3 L1819.8 278.8 L1819.3 278.6 L1818.8 278.3 L1818.3 279.1 L1817.8 278.7 L1817.3 278.2 L1816.8 277.6 L1816.3 277.9 L1815.8 279.2 L1815.3 279.6 L1814.8 277.5 L1814.3 277.7 L1813.8 279.2 L1813.3 279.3 L1812.8 277.4 L1812.3 278.4 L1811.8 278.6 L1811.3 279.2 L1810.8 278.5 L1810.3 278.7 L1809.8 278.1 L1809.3 279.2 L1808.8 278.8 L1808.3 278.0 L1807.8 279.6 L1807.3 277.9 L1806.8 278.5 L1806.3 278.5 L1805.8 278.4 L1805.3 278.3 L1804.8 279.4 L1804.3 278.9 L1803.8 278.6 L1803.3 278.4 L1802.8 277.4 L1802.3 277.7 L1801.8 278.0 L1801.3 278.5 L1800.8 278.7 L1800.3 278.5 L1799.8 279.2 L1799.3 277.9 L1798.8 279.4 L1798.3 277.5 L1797.8 278.0 L1797.3 278.4 L1796.8 277.8 L1796.3 278.3 L1795.8 278.0 L1795.3 279.2 L1794.8 278.4 L1794.3 279.1 L1793.8 278.2 L1793.3 279.3 L1792.8 277.6 L1792.3 278.5 L1791.8 278.6 L1791.3 277.8 L1790.8 277.6 L1790.3 278.9 L1789.8 277.8 L1789.3 278.2 L1788.8 277.5 L1788.3 277.5 L1787.8 278.1 L1787.3 277.6 L1786.8 278.3 L1786.3 278.1 L1785.8 279.3 L1785.3 279.3 L1784.8 277.6 L1784.3 279.1 L1783.8 278.6 L1783.3 278.6 L1782.8 277.7 L1782.3 279.2 L1781.8 278.7 L1781.3 278.7 L1780.8 278.0 L1780.3 278.7 L1779.8 278.7 L1779.3 279.2 L1778.8 278.8 L1778.3 278.8 L1777.8 246.9 L1777.3 250.9 L1776.8 245.2 L1776.3 249.7 L1775.8 252.3 L1775.3 249.2 L1774.8 250.6 L1774.3 248.0 L1773.8 257.1 L1773.3 245.9 L1772.8 254.8 L1772.3 248.3 L1771.8 249.3 L1771.3 254.5 L1770.8 248.7 L1770.3 246.9 L1769.8 252.9 L1769.3 247.4 L1768.8 252.4 L1768.3 250.0 L1767.8 247.1 L1767.3 256.3 L1766.8 248.8 L1766.3 255.4 L1765.8 247.5 L1765.3 249.2 L1764.8 250.8 L1764.3 250.7 L1763.8 252.7 L1763.3 246.8 L1762.8 247.2 L1762.3 254.9 L1761.8 249.2 L1761.3 249.9 L1760.8 249.8 L1760.3 248.9 L1759.8 249.9 L1759.3 248.1 L1758.8 249.1 L1758.3 244.2 L1757.8 249.9 L1757.3 247.1 L1756.8 248.9 L1756.3 249.8 L1755.8 245.1 L1755.3 252.8 L1754.8 258.7 L1754.3 253.0 L1753.8 247.6 L1753.3 247.7 L1752.8 249.2 L1752.3 246.0 L1751.8 248.5 L1751.3 245.5 L1750.8 255.2 L1750.3 244.0 L1749.8 245.6 L1749.3 247.4 L1748.8 247.1 L1748.3 250.5 L1747.8 248.9 L1747.3 250.8 L1746.8 249.1 L1746.3 250.5 L1745.8 251.7 L1745.3 254.8 L1744.8 254.2 L1744.3 246.4 L1743.8 251.4 L1743.3 245.4 L1742.8 249.5 L1742.3 244.8 L1741.8 245.6 L1741.3 268.7 L1740.8 273.0 L1740.3 269.8 L1739.8 272.6 L1739.3 274.0 L1738.8 279.2 L1738.3 280.0 L1737.8 277.9 L1737.3 278.7 L1736.8 278.2 L1736.3 278.6 L1735.8 277.5 L1735.3 277.8 L1734.8 279.6 L1734.3 277.6 L1733.8 278.1 L1733.3 278.9 L1732.8 278.0 L1732.3 279.2 L1731.8 278.6 L1731.3 278.7 L1730.8 277.6 L1730.3 277.6 L1729.8 278.9 L1729.3 279.2 L1728.8 278.0 L1728.3 278.7 L1727.8 278.8 L1727.3 278.1 L1726.8 279.7 L1726.3 279.3 L1725.8 278.2 L1725.3 278.1 L1724.8 279.2 L1724.3 279.2 L1723.8 279.4 L1723.3 278.2 L1722.8 277.6 L1722.3 277.5 L1721.8 277.4 L1721.3 278.1 L1720.8 279.1 L1720.3 278.5 L1719.8 277.4 L1719.3 279.3 L1718.8 277.9 L1718.3 278.4 L1717.8 278.7 L1717.3 278.9 L1716.8 277.8 L1716.3 277.7 L1715.8 277.7 L1715.3 278.1 L1714.8 279.1 L1714.3 277.7 L1713.8 277.8 L1713.3 278.6 L1712.8 277.9 L1712.3 278.2 L1711.8 279.0 L1711.3 277.8 L1710.8 277.8 L1710.3 278.7 L1709.8 277.6 L1709.3 277.6 L1708.8 278.4 L1708.3 277.4 L1707.8 278.5 L1707.3 279.3 L1706.8 279.1 L1706.3 279.2 L1705.8 277.5 L1705.3 278.0 L1704.8 278.6 L1704.3 279.0 L1703.8 279.3 L1703.3 279.3 L1702.8 278.9 L1702.3 278.1 L1701.8 279.0 L1701.3 278.0 L1700.8 277.6 L1700.3 278.9 L1699.8 279.0 L1699.3 278.9 L1698.8 277.6 L1698.3 278.8 L1697.8 279.2 L1697.3 277.5 L1696.8 279.0 L1696.3 278.4 L1695.8 278.6 L1695.3 277.6 L1694.8 278.6 L1694.3 278.0 L1693.8 279.3 L1693.3 278.6 L1692.8 278.8 L1692.3 279.0 L1691.8 277.6 L1691.3 278.9 L1690.8 278.1 L1690.3 279.2 L1689.8 277.4 L1689.3 278.1 L1688.8 279.3 L1688.3 277.6 L1687.8 277.9 L1687.3 278.6 L1686.8 279.1 L1686.3 279.4 L1685.8 278.7 L1685.3 279.3 L1684.8 277.8 L1684.3 278.0 L1683.8 277.5 L1683.3 277.8 L1682.8 277.5 L1682.3 278.6 L1681.8 277.6 L1681.3 278.8 L1680.8 278.6 L1680.3 277.6 L1679.8 279.3 L1679.3 277.7 L1678.8 279.0 L1678.3 278.5 L1677.8 277.6 L1677.3 278.1 L1676.8 277.6 L1676.3 278.2 L1675.8 279.1 L1675.3 278.5 L1674.8 278.7 L1674.3 278.7 L1673.8 279.4 L1673.3 278.9 L1672.8 277.9 L1672.3 278.6 L1671.8 277.8 L1671.3 277.5 L1670.8 278.9 L1670.3 278.0 L1669.8 279.0 L1669.3 277.5 L1668.8 278.1 L1668.3 278.7 L1667.8 278.5 L1667.3 279.5 L1666.8 279.3 L1666.3 278.3 L1665.8 278.9 L1665.3 277.6 L1664.8 279.1 L1664.3 278.9 L1663.8 278.0 L1663.3 278.8 L1662.8 277.9 L1662.3 277.5 L1661.8 277.6 L1661.3 277.8 L1660.8 278.9 L1660.3 278.9 L1659.8 279.3 L1659.3 277.9 L1658.8 277.7 L1658.3 278.3 L1657.8 277.8 L1657.3 279.9 L1656.8 278.2 L1656.3 279.3 L1655.8 278.4 L1655.3 277.9 L1654.8 278.2 L1654.3 278.6 L1653.8 278.8 L1653.3 278.3 L1652.8 278.1 L1652.3 278.3 L1651.8 279.3 L1651.3 277.5 L1650.8 278.0 L1650.3 278.4 L1649.8 277.5 L1649.3 277.7 L1648.8 278.5 L1648.3 277.5 L1647.8 277.6 L1647.3 277.5 L1646.8 279.0 L1646.3 277.6 L1645.8 278.9 L1645.3 277.8 L1644.8 277.6 L1644.3 278.8 L1643.8 278.7 L1643.3 279.3 L1642.8 279.3 L1642.3 278.7 L1641.8 278.4 L1641.3 277.4 L1640.8 277.5 L1640.3 279.2 L1639.8 279.3 L1639.3 279.0 L1638.8 278.1 L1638.3 277.7 L1637.8 279.3 L1637.3 279.2 L1636.8 279.2 L1636.3 278.9 L1635.8 278.1 L1635.3 278.5 L1634.8 277.8 L1634.3 278.8 L1633.8 278.0 L1633.3 278.8 L1632.8 278.6 L1632.3 277.7 L1631.8 278.4 L1631.3 277.8 L1630.8 279.3 L1630.3 279.8 L1629.8 277.7 L1629.3 279.0 L1628.8 279.1 L1628.3 278.3 L1627.8 278.9 L1627.3 278.3 L1626.8 278.8 L1626.3 278.6 L1625.8 278.7 L1625.3 278.8 L1624.8 279.2 L1624.3 278.7 L1623.8 278.6 L1623.3 277.8 L1622.8 278.4 L1622.3 277.9 L1621.8 278.7 L1621.3 279.3 L1620.8 277.8 L1620.3 278.9 L1619.8 277.9 L1619.3 279.0 L1618.8 278.6 L1618.3 278.9 L1617.8 280.2 L1617.3 278.0 L1616.8 277.6 L1616.3 278.3 L1615.8 279.3 L1615.3 278.4 L1614.8 277.9 L1614.3 278.5 L1613.8 278.8 L1613.3 277.9 L1612.8 278.2 L1612.3 278.4 L1611.8 251.0 L1611.3 248.8 L1610.8 247.5 L1610.3 252.8 L1609.8 247.4 L1609.3 250.5 L1608.8 246.6 L1608.3 250.4 L1607.8 248.5 L1607.3 246.2 L1606.8 247.2 L1606.3 250.7 L1605.8 244.4 L1605.3 244.6 L1604.8 247.9 L1604.3 248.0 L1603.8 250.1 L1603.3 257.8 L1602.8 254.3 L1602.3 259.5 L1601.8 248.3 L1601.3 247.0 L1600.8 250.6 L1600.3 244.3 L1599.8 245.9 L1599.3 246.3 L1598.8 247.9 L1598.3 244.8 L1597.8 246.5 L1597.3 248.5 L1596.8 250.8 L1596.3 244.6 L1595.8 255.6 L1595.3 245.2 L1594.8 245.2 L1594.3 247.0 L1593.8 244.6 L1593.3 247.8 L1592.8 249.2 L1592.3 248.3 L1591.8 251.7 L1591.3 251.0 L1590.8 250.7 L1590.3 249.1 L1589.8 246.0 L1589.3 248.3 L1588.8 249.1 L1588.3 247.2 L1587.8 247.4 L1587.3 248.5 L1586.8 244.6 L1586.3 250.0 L1585.8 255.7 L1585.3 257.7 L1584.8 251.7 L1584.3 248.7 L1583.8 247.6 L1583.3 247.0 L1582.8 252.2 L1582.3 255.5 L1581.8 248.1 L1581.3 248.2 L1580.8 249.8 L1580.3 254.8 L1579.8 244.7 L1579.3 252.1 L1578.8 255.6 L1578.3 250.2 L1577.8 258.4 L1577.3 246.0 L1576.8 248.3 L1576.3 244.1 L1575.8 249.7 L1575.3 248.6 L1574.8 270.1 L1574.3 275.4 L1573.8 266.5 L1573.3 274.4 L1572.8 272.1 L1572.3 277.6 L1571.8 278.2 L1571.3 278.3 L1570.8 279.0 L1570.3 277.5 L1569.8 279.3 L1569.3 277.9 L1568.8 279.3 L1568.3 279.4 L1567.8 278.1 L1567.3 279.1 L1566.8 278.8 L1566.3 277.7 L1565.8 279.0 L1565.3 277.7 L1564.8 278.6 L1564.3 278.5 L1563.8 279.4 L1563.3 279.3 L1562.8 278.8 L1562.3 278.4 L1561.8 279.3 L1561.3 280.3 L1560.8 277.9 L1560.3 278.5 L1559.8 278.3 L1559.3 278.1 L1558.8 279.2 L1558.3 279.2 L1557.8 277.9 L1557.3 277.9 L1556.8 279.0 L1556.3 279.3 L1555.8 278.9 L1555.3 279.3 L1554.8 277.7 L1554.3 278.9 L1553.8 278.9 L1553.3 278.0 L1552.8 278.9 L1552.3 277.6 L1551.8 277.5 L1551.3 279.0 L1550.8 277.4 L1550.3 279.3 L1549.8 277.6 L1549.3 279.2 L1548.8 278.0 L1548.3 277.9 L1547.8 279.4 L1547.3 277.7 L1546.8 277.7 L1546.3 278.9 L1545.8 278.6 L1545.3 278.0 L1544.8 277.9 L1544.3 279.2 L1543.8 277.8 L1543.3 278.2 L1542.8 278.0 L1542.3 278.2 L1541.8 279.2 L1541.3 278.9 L1540.8 278.6 L1540.3 278.6 L1539.8 277.4 L1539.3 279.3 L1538.8 279.2 L1538.3 278.1 L1537.8 278.6 L1537.3 278.8 L1536.8 277.9 L1536.3 278.5 L1535.8 278.3 L1535.3 277.5 L1534.8 278.7 L1534.3 279.2 L1533.8 277.5 L1533.3 277.5 L1532.8 279.1 L1532.3 277.9 L1531.8 278.7 L1531.3 277.9 L1530.8 278.3 L1530.3 277.6 L1529.8 277.9 L1529.3 277.8 L1528.8 279.4 L1528.3 278.3 L1527.8 279.2 L1527.3 278.3 L1526.8 277.6 L1526.3 277.6 L1525.8 278.1 L1525.3 279.3 L1524.8 277.6 L1524.3 278.9 L1523.8 278.0 L1523.3 277.7 L1522.8 278.2 L1522.3 278.6 L1521.8 278.5 L1521.3 278.7 L1520.8 279.0 L1520.3 278.4 L1519.8 279.1 L1519.3 277.4 L1518.8 278.0 L1518.3 278.2 L1517.8 277.4 L1517.3 278.5 L1516.8 278.1 L1516.3 279.0 L1515.8 278.0 L1515.3 279.1 L1514.8 279.1 L1514.3 279.0 L1513.8 279.3 L1513.3 279.0 L1512.8 278.1 L1512.3 278.9 L1511.8 279.0 L1511.3 277.4 L1510.8 279.1 L1510.3 278.1 L1509.8 278.3 L1509.3 277.5 L1508.8 278.8 L1508.3 278.3 L1507.8 278.8 L1507.3 277.7 L1506.8 277.9 L1506.3 279.3 L1505.8 279.4 L1505.3 279.1 L1504.8 278.5 L1504.3 278.8 L1503.8 278.4 L1503.3 278.9 L1502.8 277.6 L1502.3 279.1 L1501.8 278.5 L1501.3 279.3 L1500.8 277.6 L1500.3 278.8 L1499.8 278.5 L1499.3 278.3 L1498.8 279.2 L1498.3 278.2 L1497.8 277.6 L1497.3 279.1 L1496.8 278.1 L1496.3 278.6 L1495.8 277.6 L1495.3 279.0 L1494.8 278.2 L1494.3 278.1 L1493.8 277.9 L1493.3 277.7 L1492.8 279.2 L1492.3 277.9 L1491.8 278.8 L1491.3 278.1 L1490.8 278.1 L1490.3 279.2 L1489.8 278.6 L1489.3 279.3 L1488.8 278.7 L1488.3 277.6 L1487.8 278.8 L1487.3 278.9 L1486.8 277.9 L1486.3 277.7 L1485.8 278.8 L1485.3 279.2 L1484.8 279.2 L1484.3 277.5 L1483.8 278.3 L1483.3 279.0 L1482.8 277.5 L1482.3 278.8 L1481.8 277.7 L1481.3 277.4 L1480.8 278.0 L1480.3 278.2 L1479.8 277.6 L1479.3 278.4 L1478.8 278.2 L1478.3 278.0 L1477.8 278.6 L1477.3 278.4 L1476.8 279.6 L1476.3 279.3 L1475.8 278.5 L1475.3 277.6 L1474.8 277.7 L1474.3 277.5 L1473.8 278.1 L1473.3 279.0 L1472.8 279.3 L1472.3 277.8 L1471.8 277.8 L1471.3 278.8 L1470.8 278.2 L1470.3 279.1 L1469.8 278.8 L1469.3 278.0 L1468.8 278.6 L1468.3 277.8 L1467.8 279.4 L1467.3 278.6 L1466.8 277.5 L1466.3 278.2 L1465.8 279.1 L1465.3 279.2 L1464.8 279.1 L1464.3 278.9 L1463.8 279.2 L1463.3 278.0 L1462.8 278.8 L1462.3 277.7 L1461.8 278.6 L1461.3 277.8 L1460.8 278.2 L1460.3 278.2 L1459.8 278.7 L1459.3 278.0 L1458.8 278.6 L1458.3 278.2 L1457.8 277.7 L1457.3 278.9 L1456.8 278.3 L1456.3 278.8 L1455.8 278.9 L1455.3 279.2 L1454.8 278.1 L1454.3 278.2 L1453.8 278.8 L1453.3 279.4 L1452.8 277.9 L1452.3 279.2 L1451.8 278.4 L1451.3 279.0 L1450.8 279.3 L1450.3 279.1 L1449.8 278.3 L1449.3 279.0 L1448.8 279.0 L1448.3 278.5 L1447.8 277.5 L1447.3 279.5 L1446.8 278.3 L1446.3 278.3 L1445.8 278.9 L1445.3 244.8 L1444.8 245.0 L1444.3 244.5 L1443.8 250.0 L1443.3 247.8 L1442.8 254.6 L1442.3 250.2 L1441.8 247.2 L1441.3 248.8 L1440.8 255.1 L1440.3 244.2 L1439.8 253.4 L1439.3 247.7 L1438.8 246.7 L1438.3 248.8 L1437.8 249.3 L1437.3 247.6 L1436.8 244.8 L1436.3 246.2 L1435.8 250.6 L1435.3 247.9 L1434.8 246.3 L1434.3 252.9 L1433.8 247.6 L1433.3 250.9 L1432.8 251.4 L1432.3 257.8 L1431.8 254.6 L1431.3 250.2 L1430.8 246.5 L1430.3 250.4 L1429.8 247.1 L1429.3 245.1 L1428.8 255.5 L1428.3 249.7 L1427.8 247.3 L1427.3 246.4 L1426.8 245.5 L1426.3 244.2 L1425.8 245.9 L1425.3 244.6 L1424.8 254.8 L1424.3 245.0 L1423.8 244.2 L1423.3 245.9 L1422.8 248.8 L1422.3 244.5 L1421.8 250.7 L1421.3 247.7 L1420.8 245.0 L1420.3 257.3 L1419.8 254.8 L1419.3 257.6 L1418.8 249.5 L1418.3 247.8 L1417.8 256.0 L1417.3 249.0 L1416.8 249.9 L1416.3 257.5 L1415.8 246.8 L1415.3 245.8 L1414.8 244.1 L1414.3 250.9 L1413.8 257.0 L1413.3 248.6 L1412.8 257.3 L1412.3 249.5 L1411.8 246.6 L1411.3 247.3 L1410.8 246.1 L1410.3 246.2 L1409.8 246.6 L1409.3 249.5 L1408.8 246.8 L1408.3 271.1 L1407.8 267.2 L1407.3 270.9 L1406.8 270.7 L1406.3 270.7 L1405.8 278.8 L1405.3 278.5 L1404.8 278.8 L1404.3 279.2 L1403.8 278.3 L1403.3 278.9 L1402.8 277.9 L1402.3 278.9 L1401.8 278.5 L1401.3 278.7 L1400.8 278.3 L1400.3 277.9 L1399.8 279.3 L1399.3 277.5 L1398.8 277.8 L1398.3 278.5 L1397.8 278.4 L1397.3 279.3 L1396.8 279.2 L1396.3 278.8 L1395.8 278.0 L1395.3 278.7 L1394.8 278.8 L1394.3 279.3 L1393.8 278.9 L1393.3 278.6 L1392.8 277.8 L1392.3 277.6 L1391.8 279.3 L1391.3 278.1 L1390.8 277.9 L1390.3 279.0 L1389.8 278.8 L1389.3 279.1 L1388.8 278.4 L1388.3 278.4 L1387.8 278.4 L1387.3 279.1 L1386.8 278.3 L1386.3 278.4 L1385.8 278.7 L1385.3 277.4 L1384.8 278.4 L1384.3 277.6 L1383.8 278.6 L1383.3 278.0 L1382.8 279.2 L1382.3 279.2 L1381.8 278.2 L1381.3 278.0 L1380.8 278.6 L1380.3 278.7 L1379.8 279.0 L1379.3 277.7 L1378.8 277.4 L1378.3 278.3 L1377.8 279.3 L1377.3 278.1 L1376.8 278.9 L1376.3 277.6 L1375.8 278.5 L1375.3 277.8 L1374.8 277.5 L1374.3 278.1 L1373.8 279.2 L1373.3 279.3 L1372.8 278.1 L1372.3 277.8 L1371.8 278.2 L1371.3 278.4 L1370.8 278.2 L1370.3 279.0 L1369.8 279.2 L1369.3 278.2 L1368.8 277.6 L1368.3 278.9 L1367.8 277.8 L1367.3 277.9 L1366.8 279.0 L1366.3 277.8 L1365.8 278.7 L1365.3 277.9 L1364.8 278.1 L1364.3 279.0 L1363.8 278.6 L1363.3 279.2 L1362.8 277.5 L1362.3 279.3 L1361.8 278.6 L1361.3 279.1 L1360.8 279.3 L1360.3 277.7 L1359.8 278.4 L1359.3 278.8 L1358.8 278.5 L1358.3 278.4 L1357.8 279.4 L1357.3 278.7 L1356.8 279.4 L1356.3 279.2 L1355.8 277.6 L1355.3 278.5 L1354.8 278.1 L1354.3 278.1 L1353.8 279.2 L1353.3 278.5 L1352.8 277.7 L1352.3 278.0 L1351.8 277.9 L1351.3 279.2 L1350.8 278.0 L1350.3 278.8 L1349.8 278.9 L1349.3 277.8 L1348.8 279.0 L1348.3 278.1 L1347.8 280.6 L1347.3 277.9 L1346.8 279.4 L1346.3 278.8 L1345.8 277.9 L1345.3 277.9 L1344.8 278.4 L1344.3 278.5 L1343.8 278.1 L1343.3 278.6 L1342.8 279.0 L1342.3 279.3 L1341.8 277.5 L1341.3 279.1 L1340.8 279.2 L1340.3 277.6 L1339.8 279.1 L1339.3 278.0 L1338.8 278.2 L1338.3 277.5 L1337.8 278.2 L1337.3 278.9 L1336.8 278.5 L1336.3 277.5 L1335.8 278.0 L1335.3 277.6 L1334.8 279.1 L1334.3 277.9 L1333.8 278.4 L1333.3 278.0 L1332.8 279.3 L1332.3 277.4 L1331.8 278.4 L1331.3 277.8 L1330.8 277.5 L1330.3 278.3 L1329.8 278.1 L1329.3 278.2 L1328.8 279.3 L1328.3 278.1 L1327.8 277.6 L1327.3 278.7 L1326.8 279.1 L1326.3 279.0 L1325.8 279.3 L1325.3 278.4 L1324.8 277.6 L1324.3 278.3 L1323.8 279.0 L1323.3 277.7 L1322.8 278.0 L1322.3 278.5 L1321.8 279.3 L1321.3 277.6 L1320.8 277.9 L1320.3 277.7 L1319.8 277.7 L1319.3 277.8 L1318.8 277.5 L1318.3 279.1 L1317.8 279.3 L1317.3 278.3 L1316.8 280.7 L1316.3 278.8 L1315.8 279.2 L1315.3 279.1 L1314.8 277.9 L1314.3 277.9 L1313.8 279.3 L1313.3 277.5 L1312.8 278.2 L1312.3 279.1 L1311.8 278.6 L1311.3 279.3 L1310.8 279.0 L1310.3 278.2 L1309.8 278.8 L1309.3 278.6 L1308.8 278.3 L1308.3 278.8 L1307.8 278.0 L1307.3 277.8 L1306.8 277.8 L1306.3 278.6 L1305.8 277.6 L1305.3 278.6 L1304.8 279.2 L1304.3 279.0 L1303.8 278.5 L1303.3 277.8 L1302.8 279.0 L1302.3 277.5 L1301.8 279.1 L1301.3 277.9 L1300.8 279.1 L1300.3 278.0 L1299.8 277.7 L1299.3 278.3 L1298.8 278.6 L1298.3 278.7 L1297.8 277.6 L1297.3 279.1 L1296.8 278.7 L1296.3 279.4 L1295.8 279.3 L1295.3 278.8 L1294.8 278.3 L1294.3 278.0 L1293.8 278.5 L1293.3 279.5 L1292.8 277.8 L1292.3 277.8 L1291.8 278.0 L1291.3 278.7 L1290.8 278.1 L1290.3 277.4 L1289.8 278.2 L1289.3 278.9 L1288.8 278.9 L1288.3 280.6 L1287.8 278.0 L1287.3 277.6 L1286.8 278.8 L1286.3 279.1 L1285.8 278.7 L1285.3 278.2 L1284.8 279.4 L1284.3 278.0 L1283.8 277.9 L1283.3 277.9 L1282.8 277.4 L1282.3 277.9 L1281.8 277.7 L1281.3 278.2 L1280.8 278.2 L1280.3 278.0 L1279.8 277.5 L1279.3 278.9 L1278.8 246.3 L1278.3 250.8 L1277.8 250.7 Z" fill="#8e8f5c"/><path d="M1247.3 220.7 L1247.8 220.3 L1248.3 220.1 L1248.8 222.4 L1249.3 222.2 L1249.8 221.4 L1250.3 221.5 L1250.8 219.9 L1251.3 221.8 L1251.8 220.9 L1252.3 222.0 L1252.8 220.7 L1253.3 221.1 L1253.8 219.5 L1254.3 219.7 L1254.8 221.9 L1255.3 219.5 L1255.8 221.6 L1256.3 220.3 L1256.8 221.6 L1257.3 222.2 L1257.8 219.5 L1258.3 221.5 L1258.8 220.6 L1259.3 220.0 L1259.8 220.3 L1260.3 220.0 L1260.8 219.9 L1261.3 220.2 L1261.8 221.6 L1262.3 220.4 L1262.8 220.1 L1263.3 220.7 L1263.8 221.4 L1264.3 220.6 L1264.8 219.5 L1265.3 220.3 L1265.8 221.4 L1266.3 219.7 L1266.8 220.4 L1267.3 219.9 L1267.8 219.9 L1268.3 219.5 L1268.8 219.6 L1269.3 220.2 L1269.8 220.2 L1270.3 220.5 L1270.8 221.3 L1271.3 222.0 L1271.8 220.3 L1272.3 221.4 L1272.8 221.4 L1273.3 222.3 L1273.8 221.5 L1274.3 219.9 L1274.8 220.3 L1275.3 219.9 L1275.8 219.7 L1276.3 215.4 L1276.8 214.0 L1277.3 215.1 L1277.8 215.0 L1277.8 250.7 L1277.3 250.4 L1276.8 251.3 L1276.3 248.7 L1275.8 257.6 L1275.3 253.7 L1274.8 252.6 L1274.3 249.9 L1273.8 252.7 L1273.3 252.2 L1272.8 249.9 L1272.3 254.7 L1271.8 251.4 L1271.3 252.3 L1270.8 247.9 L1270.3 251.4 L1269.8 250.3 L1269.3 252.2 L1268.8 249.3 L1268.3 246.4 L1267.8 249.9 L1267.3 248.4 L1266.8 248.8 L1266.3 246.4 L1265.8 247.6 L1265.3 247.5 L1264.8 251.7 L1264.3 251.7 L1263.8 251.0 L1263.3 247.8 L1262.8 246.2 L1262.3 246.4 L1261.8 257.0 L1261.3 248.5 L1260.8 252.5 L1260.3 251.7 L1259.8 250.8 L1259.3 247.5 L1258.8 256.6 L1258.3 252.2 L1257.8 246.4 L1257.3 252.9 L1256.8 247.7 L1256.3 253.0 L1255.8 247.0 L1255.3 258.6 L1254.8 257.4 L1254.3 247.1 L1253.8 256.2 L1253.3 252.5 L1252.8 246.5 L1252.3 249.5 L1251.8 251.0 L1251.3 247.5 L1250.8 251.4 L1250.3 247.2 L1249.8 249.5 L1249.3 250.5 L1248.8 251.3 L1248.3 247.3 L1247.8 254.1 L1247.3 246.3 Z" fill="#fcfc3c"/><path d="M1271.5 125.3 V386" stroke="#858585" stroke-width="1"/><rect x="1247" y="121" width="31.299999999999955" height="3.6" fill="#0000f0"/><rect x="1247" y="385.8" width="31.299999999999955" height="4.2" fill="#ff00e6"/><rect x="1228.5" y="229.8" width="18.5" height="52" fill="rgba(106,106,106,.93)" stroke="#b4b4b4" stroke-width="1.2"/><path d="M1228.5 235.5 L1247 244.8 M1228.5 276 L1247 266" stroke="#b4b4b4" stroke-width="1"/><rect x="1278.3" y="229.8" width="18.5" height="52" fill="rgba(106,106,106,.93)" stroke="#b4b4b4" stroke-width="1.2"/><path d="M1296.8 235.5 L1278.3 244.8 M1296.8 276 L1278.3 266" stroke="#b4b4b4" stroke-width="1"/><rect x="1123.6" y="135.4" width="83.8" height="25.8" fill="#1b1b1b"/><rect x="1754.4" y="135.4" width="81.8" height="50.4" fill="#1b1b1b"/><rect x="1240.5" y="207" width="18.8" height="11.6" fill="#141414"/><rect x="1271.8" y="206" width="16" height="11.2" fill="#141414"/><path d="M1248.7 218.6 L1256.6 226.5 L1248.7 234.4 L1240.8 226.5 Z" fill="#fff" stroke="#111" stroke-width="1"/><path d="M1248.7 222.4 L1252.8 226.5 L1248.7 230.6 L1244.6 226.5 Z" fill="#f5f53a" stroke="#111" stroke-width="1.1"/><path d="M1278.7 218.4 L1286 225.7 L1278.7 233 L1271.4 225.7 Z" fill="#fff"/></svg>
<span class="t" style="left:1125.6px;top:136.3px;font-size:11px;line-height:11px;color:#fff;">MR: -45.96 dBm</span>
<span class="t" style="left:1125.6px;top:148.3px;font-size:11px;line-height:11px;color:#fff;">46.021 ms</span>
<span class="t" style="left:1756.5px;top:136.3px;font-size:11px;line-height:11px;color:#fff;">M1: -45.63 dBm</span>
<span class="t" style="left:1756.5px;top:148.3px;font-size:11px;line-height:11px;color:#fff;">56.245 ms</span>
<span class="t" style="left:1756.5px;top:160.3px;font-size:11px;line-height:11px;color:#fff;">ΔM1: 0.32 dB</span>
<span class="t" style="left:1756.5px;top:172.3px;font-size:11px;line-height:11px;color:#fff;">10.225 ms</span>
<span class="t" style="left:1242.4px;top:208.4px;font-size:11px;line-height:11px;color:#fff;">MR</span>
<span class="t" style="left:1272.6px;top:207.2px;font-size:11px;line-height:11px;color:#fff;">M1</span>
<span class="t" style="left:1112.6px;top:388.6px;font-size:11px;line-height:11px;color:#7a0000;font-weight:bold;">r</span>
<svg style="left:1113px;top:407.5px" width="9" height="8" viewBox="0 0 9 8"><rect x="1.6" y="0.2" width="5.8" height="3.6" rx="1.4" fill="#c4c4c4"/><rect x="2" y="1.1" width="1.7" height="1.7" fill="#0a8a0a"/><rect x="3.3" y="2" width="1" height="1" fill="#e6e600"/><rect x="0" y="3.7" width="8" height="1.1" fill="#111"/><rect x="3.6" y="3.7" width="1" height="1.1" fill="#ddd"/><path d="M1.5 5 H6.6 L5.6 6.9 H2.5 Z" fill="#00008a"/></svg>
<div style="left:1176px;top:403px;width:150px;height:18px;background:#fff;"></div>
<span class="t" style="left:1129.4px;top:406px;font-size:12px;line-height:12px;color:#000;letter-spacing:-0.13px;">Position:</span>
<span class="t" style="left:1181.4px;top:406px;font-size:12px;line-height:12px;color:#000;letter-spacing:0.27px;">0.000 s</span>
<svg style="left:1780.5px;top:407.5px" width="9" height="8" viewBox="0 0 9 8"><rect x="1.6" y="0.2" width="5.8" height="3.6" rx="1.4" fill="#c4c4c4"/><rect x="2" y="1.1" width="1.7" height="1.7" fill="#0a8a0a"/><rect x="3.3" y="2" width="1" height="1" fill="#e6e600"/><rect x="0" y="3.7" width="8" height="1.1" fill="#111"/><rect x="3.6" y="3.7" width="1" height="1.1" fill="#ddd"/><path d="M1.5 5 H6.6 L5.6 6.9 H2.5 Z" fill="#00008a"/></svg>
<div style="left:1838px;top:403px;width:72px;height:18px;background:#fff;"></div>
<span class="t" style="left:1797.5px;top:406px;font-size:12px;line-height:12px;color:#000;letter-spacing:-0.47px;">Scale:</span>
<span class="t" style="left:1842.5px;top:406px;font-size:12px;line-height:12px;color:#000;letter-spacing:0.20px;">269.644 ms</span>
<div style="left:960px;top:425px;width:958px;height:338px;background:#b4b4b4;"></div>
<div style="left:961px;top:426px;width:956px;height:336px;background:#cfcfcf;"></div>
<div style="left:960px;top:425px;width:958px;height:23.5px;background:linear-gradient(#a8a8a8 0,#d8d8d8 1px,#d8d8d8 2.4px,#c2c2c2 4.4px,#c2c2c2 9.5px,#cdcdcd 23.5px);"></div>
<div style="left:964px;top:448.5px;width:950px;height:310.5px;background:#fdfdfd;"></div>
<svg style="left:966px;top:429px" width="15" height="15" viewBox="0 0 16 16"><rect width="16" height="16" fill="#000"/><path d="M2.2 12.4 L4.2 12.2 L5.4 10.6 L6.2 4.6 L7.4 3.4 M9.4 4.4 L9.8 6 M10.6 10.4 L12 10.8 L13.4 12.4" stroke="#f6f010" stroke-width="1.3" fill="none"/></svg>
<span class="t" style="left:986.0px;top:430.8px;font-size:13px;line-height:13px;color:#ececec;font-weight:bold;text-shadow:1px 1px 0 rgba(120,120,120,.55);letter-spacing:0.29px;">Spectrum</span>
<div style="left:1876px;top:429px;width:17px;height:17px;background:linear-gradient(#e4e4e4,#d2d2d2);border:1px solid #b6b6b6;border-radius:3px;box-shadow:0 0 0 1px #a0a0a044;"></div><svg style="left:1876px;top:429px" width="17" height="17" viewBox="0 0 17 17"><rect x="4.5" y="4.5" width="8" height="8" fill="none" stroke="#b4b4b4" stroke-width="2.4"/><rect x="4.5" y="4.5" width="8" height="8" fill="none" stroke="#f8f8f8" stroke-width="1"/><rect x="4" y="4" width="9" height="2.5" fill="#f8f8f8"/></svg>
<div style="left:1897px;top:429px;width:17px;height:17px;background:linear-gradient(#e4e4e4,#d2d2d2);border:1px solid #b6b6b6;border-radius:3px;box-shadow:0 0 0 1px #a0a0a044;"></div><svg style="left:1897px;top:429px" width="17" height="17" viewBox="0 0 17 17"><path d="M4 4 L13 13 M13 4 L4 13" stroke="#b0b0b0" stroke-width="3.4" stroke-linecap="square"/><path d="M4 4 L13 13 M13 4 L4 13" stroke="#f8f8f8" stroke-width="2" stroke-linecap="square"/></svg>
<svg style="left:1054.9px;top:457px" width="13.2" height="8.4" viewBox="-1 -1 13.2 8.4"><defs><linearGradient id="tg1055" x1="0" y1="0" x2="1" y2="0"><stop offset="0" stop-color="#a8a8a8"/><stop offset="0.6" stop-color="#dcdcdc"/><stop offset="0.85" stop-color="#f4f4f4"/></linearGradient></defs><path d="M0 0.2 L11.2 0.2 L5.6 6.4 Z" fill="url(#tg1055)"/><path d="M0 0.2 H8.064" stroke="#9c9c9c" stroke-width="0.9"/><path d="M0 0.2 L5.6 6.4" stroke="#b4b4b4" stroke-width="0.8"/><path d="M11.2 0 L5.5 6.4" stroke="#14148c" stroke-width="1.25"/></svg>
<span class="t" style="left:1073.3px;top:457px;font-size:12px;line-height:12px;color:#000;letter-spacing:-0.04px;">Trace 1</span>
<div style="left:1162px;top:455px;width:13px;height:13px;background:linear-gradient(160deg,#ffffff 30%,#dcdcdc);border:1.6px solid #2384d0;border-radius:2.5px;"></div>
<svg style="left:1162px;top:455px" width="13" height="13" viewBox="0 0 13 13"><path d="M3 6.4 L5.4 9.4 L10 3.4" fill="none" stroke="#2a7fd0" stroke-width="1.5"/></svg>
<span class="t" style="left:1179.6px;top:457px;font-size:12px;line-height:12px;color:#000;letter-spacing:0.09px;">Show</span>
<span class="t" style="left:1221.0px;top:457px;font-size:12px;line-height:12px;color:#000;letter-spacing:-0.15px;">+Peak Normal</span>
<div class="btn" style="left:1869px;top:452px;width:40px;height:20px;"></div>
<span class="t" style="left:1876.7px;top:456.8px;font-size:12px;line-height:12px;color:#000;letter-spacing:-0.80px;">Clear</span>
<svg style="left:964.5px;top:478px" width="9" height="8" viewBox="0 0 9 8"><rect x="1.6" y="0.2" width="5.8" height="3.6" rx="1.4" fill="#c4c4c4"/><rect x="2" y="1.1" width="1.7" height="1.7" fill="#0a8a0a"/><rect x="3.3" y="2" width="1" height="1" fill="#e6e600"/><rect x="0" y="3.7" width="8" height="1.1" fill="#111"/><rect x="3.6" y="3.7" width="1" height="1.1" fill="#ddd"/><path d="M1.5 5 H6.6 L5.6 6.9 H2.5 Z" fill="#00008a"/></svg>
<div style="left:977px;top:473px;width:70px;height:18px;background:#fff;"></div>
<span class="t" style="left:980.6px;top:475.7px;font-size:12px;line-height:12px;color:#000;letter-spacing:0.16px;">-5.00</span>
<div style="left:978px;top:497px;width:70px;height:19px;border:1px solid #a9a9a9;background:#fff;"></div>
<div style="left:1032px;top:500px;width:14px;height:14px;border:1px solid #2b83c9;border-radius:3px;background:linear-gradient(#ffffff,#e6eef6);"></div>
<svg style="left:1034.0px;top:503.5px" width="10" height="8" viewBox="0 0 10 8"><path d="M1 1.5 L5 6 L9 1.5" fill="none" stroke="#2a7fd0" stroke-width="1.4"/></svg>
<span class="t" style="left:982.0px;top:500.8px;font-size:12px;line-height:12px;color:#000;letter-spacing:-0.84px;">dBm</span>
<svg style="left:964.5px;top:554px" width="9" height="8" viewBox="0 0 9 8"><rect x="1.6" y="0.2" width="5.8" height="3.6" rx="1.4" fill="#c4c4c4"/><rect x="2" y="1.1" width="1.7" height="1.7" fill="#0a8a0a"/><rect x="3.3" y="2" width="1" height="1" fill="#e6e600"/><rect x="0" y="3.7" width="8" height="1.1" fill="#111"/><rect x="3.6" y="3.7" width="1" height="1.1" fill="#ddd"/><path d="M1.5 5 H6.6 L5.6 6.9 H2.5 Z" fill="#00008a"/></svg>
<span class="t" style="left:976.5px;top:540.8px;font-size:12px;line-height:12px;color:#000;letter-spacing:0.05px;">dB/div:</span>
<div style="left:977px;top:554px;width:70px;height:18px;background:#fff;"></div>
<span class="t" style="left:980.6px;top:556.6px;font-size:12px;line-height:12px;color:#000;letter-spacing:0.10px;">10.0 dB</span>
<svg style="left:965px;top:593px" width="9" height="8" viewBox="0 0 9 8"><rect x="1.6" y="0.2" width="5.8" height="3.6" rx="1.4" fill="#c4c4c4"/><rect x="2" y="1.1" width="1.7" height="1.7" fill="#0a8a0a"/><rect x="3.3" y="2" width="1" height="1" fill="#e6e600"/><rect x="0" y="3.7" width="8" height="1.1" fill="#111"/><rect x="3.6" y="3.7" width="1" height="1.1" fill="#ddd"/><path d="M1.5 5 H6.6 L5.6 6.9 H2.5 Z" fill="#00008a"/></svg>
<span class="t" style="left:977.0px;top:580.5px;font-size:12px;line-height:12px;color:#000;letter-spacing:-0.71px;">RBW:</span>
<div style="left:977px;top:594px;width:70px;height:18px;background:#fff;"></div>
<span class="t" style="left:981.0px;top:597px;font-size:12px;line-height:12px;color:#000;font-style:italic;">300 kHz</span>
<div style="left:968.5px;top:616px;width:13px;height:13px;background:linear-gradient(160deg,#ffffff 30%,#dcdcdc);border:1.6px solid #2384d0;border-radius:2.5px;"></div>
<span class="t" style="left:986.5px;top:617.3px;font-size:12px;line-height:12px;color:#000;letter-spacing:-0.05px;">VBW:</span>
<div class="btn" style="left:968px;top:735px;width:72px;height:20px;"></div>
<span class="t" style="left:977.4px;top:739.5px;font-size:12px;line-height:12px;color:#000;letter-spacing:-0.09px;">Autoscale</span>
<span class="t" style="left:1064.8px;top:472.7px;font-size:12px;line-height:12px;color:#000;letter-spacing:0.58px;">-5.0 -</span>
<span class="t" style="left:1057.9px;top:497.76px;font-size:12px;line-height:12px;color:#000;letter-spacing:0.52px;">-15.0 -</span>
<span class="t" style="left:1057.9px;top:522.8199999999999px;font-size:12px;line-height:12px;color:#000;letter-spacing:0.52px;">-25.0 -</span>
<span class="t" style="left:1057.9px;top:547.88px;font-size:12px;line-height:12px;color:#000;letter-spacing:0.52px;">-35.0 -</span>
<span class="t" style="left:1057.9px;top:572.9399999999999px;font-size:12px;line-height:12px;color:#000;letter-spacing:0.52px;">-45.0 -</span>
<span class="t" style="left:1057.9px;top:598.0px;font-size:12px;line-height:12px;color:#000;letter-spacing:0.52px;">-55.0 -</span>
<span class="t" style="left:1057.9px;top:623.06px;font-size:12px;line-height:12px;color:#000;letter-spacing:0.52px;">-65.0 -</span>
<span class="t" style="left:1057.9px;top:648.12px;font-size:12px;line-height:12px;color:#000;letter-spacing:0.52px;">-75.0 -</span>
<span class="t" style="left:1057.9px;top:673.18px;font-size:12px;line-height:12px;color:#000;letter-spacing:0.52px;">-85.0 -</span>
<span class="t" style="left:1057.9px;top:698.24px;font-size:12px;line-height:12px;color:#000;letter-spacing:0.52px;">-95.0 -</span>
<span class="t" style="left:1050.9px;top:723.3px;font-size:12px;line-height:12px;color:#000;letter-spacing:0.49px;">-105.0 -</span>
<svg style="left:0;top:0" width="1928" height="740" viewBox="0 0 1928 740"><rect x="1100.4" y="475.8" width="799.3999999999999" height="250.8" fill="#000"/><path d="M1180.5 475.8 V726.6 M1260.5 475.8 V726.6 M1340.5 475.8 V726.6 M1420.5 475.8 V726.6 M1500.5 475.8 V726.6 M1580.5 475.8 V726.6 M1660.5 475.8 V726.6 M1740.5 475.8 V726.6 M1820.5 475.8 V726.6 M1100.4 500.5 H1899.8 M1100.4 526.5 H1899.8 M1100.4 551.5 H1899.8 M1100.4 576.5 H1899.8 M1100.4 601.5 H1899.8 M1100.4 626.5 H1899.8 M1100.4 651.5 H1899.8 M1100.4 676.5 H1899.8 M1100.4 701.5 H1899.8 " stroke="#858585" stroke-width="1" fill="none"/><path d="M1100.4 669.8 L1103.1 670.6 L1105.8 670.5 L1108.5 665.9 L1111.2 667.4 L1113.9 666.9 L1116.6 667.3 L1119.3 665.2 L1122.0 664.9 L1124.7 666.2 L1127.4 665.3 L1130.1 666.3 L1132.8 664.2 L1135.5 663.9 L1138.2 667.3 L1140.9 666.7 L1143.6 667.1 L1146.3 668.4 L1149.0 666.7 L1151.7 664.5 L1154.4 667.9 L1157.1 667.9 L1159.8 668.2 L1162.5 668.1 L1165.2 670.1 L1167.9 667.3 L1170.6 668.7 L1173.3 666.9 L1176.0 667.5 L1178.7 668.2 L1181.4 666.5 L1184.1 664.8 L1186.8 666.4 L1189.5 668.3 L1192.2 668.2 L1194.9 667.4 L1197.6 668.3 L1200.3 666.0 L1203.0 665.3 L1205.7 665.9 L1208.4 668.9 L1211.1 666.4 L1213.8 665.2 L1216.5 664.8 L1219.2 664.4 L1221.9 665.6 L1224.6 667.7 L1227.3 669.7 L1230.0 667.6 L1232.7 667.3 L1235.4 666.7 L1238.1 666.7 L1240.8 669.4 L1243.5 669.0 L1246.2 667.2 L1248.9 665.9 L1251.6 669.4 L1254.3 670.0 L1257.0 670.9 L1259.7 667.9 L1262.4 668.8 L1265.1 671.1 L1267.8 670.1 L1270.5 671.8 L1273.2 667.9 L1275.9 671.3 L1278.6 667.2 L1281.3 668.1 L1284.0 666.1 L1286.7 670.0 L1289.4 670.5 L1292.1 672.2 L1294.8 671.8 L1297.5 672.6 L1300.2 670.5 L1302.9 672.4 L1305.6 671.6 L1308.3 669.2 L1311.0 671.9 L1313.7 669.4 L1316.4 667.7 L1319.1 666.5 L1321.8 668.3 L1324.5 667.3 L1327.2 671.2 L1329.9 672.4 L1332.6 668.6 L1335.3 666.9 L1338.0 668.7 L1340.7 667.2 L1343.4 668.9 L1346.1 670.8 L1348.8 668.3 L1351.5 668.4 L1354.2 671.1 L1356.9 669.3 L1359.6 668.2 L1362.3 670.9 L1365.0 671.3 L1367.7 671.8 L1370.4 670.7 L1373.1 668.8 L1375.8 669.8 L1378.5 670.8 L1381.2 670.0 L1383.9 667.5 L1386.6 667.0 L1389.3 667.5 L1392.0 669.6 L1394.7 669.0 L1397.4 668.7 L1400.1 670.1 L1402.8 666.5 L1405.5 668.3 L1408.2 667.1 L1410.9 668.0 L1413.6 669.8 L1416.3 667.0 L1419.0 670.0 L1421.7 666.0 L1424.4 667.5 L1427.1 667.7 L1429.8 666.1 L1432.5 667.4 L1435.2 667.2 L1437.9 667.0 L1440.6 668.4 L1443.3 664.8 L1446.0 665.8 L1448.7 668.3 L1451.4 665.5 L1454.1 668.6 L1456.8 665.9 L1459.5 667.7 L1462.2 665.4 L1464.9 666.2 L1467.6 666.3 L1470.3 664.4 L1473.0 667.2 L1475.7 666.9 L1478.4 667.9 L1481.1 667.4 L1483.8 667.2 L1486.5 666.1 L1489.2 661.0 L1491.9 651.7 L1494.6 623.9 L1497.3 590.0 L1500.0 569.5 L1502.7 579.5 L1505.4 611.4 L1508.1 643.3 L1510.8 659.9 L1513.5 664.2 L1516.2 665.3 L1518.9 665.6 L1521.6 665.4 L1524.3 669.0 L1527.0 666.7 L1529.7 666.2 L1532.4 666.3 L1535.1 668.6 L1537.8 667.3 L1540.5 667.4 L1543.2 665.8 L1545.9 665.4 L1548.6 664.3 L1551.3 664.7 L1554.0 665.1 L1556.7 668.5 L1559.4 667.6 L1562.1 665.1 L1564.8 666.4 L1567.5 664.9 L1570.2 666.9 L1572.9 666.8 L1575.6 669.2 L1578.3 666.5 L1581.0 669.0 L1583.7 666.4 L1586.4 669.8 L1589.1 668.8 L1591.8 665.2 L1594.5 668.4 L1597.2 666.4 L1599.9 666.3 L1602.6 665.0 L1605.3 668.5 L1608.0 665.4 L1610.7 668.1 L1613.4 666.9 L1616.1 668.2 L1618.8 666.4 L1621.5 664.6 L1624.2 668.8 L1626.9 668.5 L1629.6 665.7 L1632.3 669.4 L1635.0 670.1 L1637.7 666.2 L1640.4 664.1 L1643.1 666.7 L1645.8 664.9 L1648.5 667.6 L1651.2 666.9 L1653.9 668.0 L1656.6 667.5 L1659.3 668.5 L1662.0 669.0 L1664.7 667.9 L1667.4 667.5 L1670.1 665.9 L1672.8 664.2 L1675.5 663.5 L1678.2 667.3 L1680.9 662.1 L1683.6 657.6 L1686.3 660.4 L1689.0 665.9 L1691.7 666.4 L1694.4 668.2 L1697.1 666.3 L1699.8 665.3 L1702.5 666.6 L1705.2 667.5 L1707.9 668.7 L1710.6 665.6 L1713.3 667.9 L1716.0 669.1 L1718.7 669.4 L1721.4 664.7 L1724.1 664.6 L1726.8 666.8 L1729.5 667.6 L1732.2 663.1 L1734.9 663.1 L1737.6 664.0 L1740.3 662.7 L1743.0 658.7 L1745.7 652.4 L1748.4 647.9 L1751.1 638.8 L1753.8 636.8 L1756.5 635.6 L1759.2 634.6 L1761.9 636.0 L1764.6 636.8 L1767.3 636.2 L1770.0 649.8 L1772.7 655.3 L1775.4 658.3 L1778.1 662.0 L1780.8 665.8 L1783.5 667.9 L1786.2 667.1 L1788.9 665.6 L1791.6 663.2 L1794.3 666.9 L1797.0 665.5 L1799.7 665.1 L1802.4 663.2 L1805.1 662.5 L1807.8 664.3 L1810.5 668.2 L1813.2 668.1 L1815.9 667.9 L1818.6 667.7 L1821.3 665.4 L1824.0 664.2 L1826.7 666.3 L1829.4 664.0 L1832.1 666.3 L1834.8 666.6 L1837.5 666.9 L1840.2 664.7 L1842.9 663.8 L1845.6 665.8 L1848.3 664.6 L1851.0 667.1 L1853.7 666.0 L1856.4 667.5 L1859.1 668.7 L1861.8 668.3 L1864.5 667.8 L1867.2 665.8 L1869.9 666.1 L1872.6 669.8 L1875.3 666.9 L1878.0 666.2 L1880.7 667.2 L1883.4 667.8 L1886.1 669.4 L1888.8 667.2 L1891.5 670.2 L1894.2 665.9 L1896.9 669.0 L1899.6 668.7" fill="none" stroke="#f2f23c" stroke-width="1.1" stroke-linejoin="round"/><path d="M1497.4 719 L1500.5 725.6 L1503.6 719" fill="none" stroke="#fff" stroke-width="1"/><path d="M1500.5 556.3000000000001 L1507.9 563.7 L1500.5 571.1 L1493.1 563.7 Z" fill="#fff"/><path d="M1510.2 642.1 L1517.5 649.4 L1510.2 656.6999999999999 L1502.9 649.4 Z" fill="#000"/><path d="M1510.2 643.4 L1516.2 649.4 L1510.2 655.4 L1504.2 649.4 Z" fill="none" stroke="#fff" stroke-width="1.9"/></svg>
<span class="t" style="left:1111.9px;top:485.5px;font-size:11px;line-height:11px;color:#fff;">MR: -76.56 dBm</span>
<span class="t" style="left:1111.9px;top:497.6px;font-size:11px;line-height:11px;color:#fff;">2.4625 GHz</span>
<span class="t" style="left:1751.7px;top:485.3px;font-size:11px;line-height:11px;color:#fff;">M1: -42.23 dBm</span>
<span class="t" style="left:1751.7px;top:497.35px;font-size:11px;line-height:11px;color:#fff;">2.462 GHz</span>
<span class="t" style="left:1751.7px;top:509.4px;font-size:11px;line-height:11px;color:#fff;">ΔM1: 34.33 dB</span>
<span class="t" style="left:1751.7px;top:521.45px;font-size:11px;line-height:11px;color:#fff;">-500 kHz</span>
<span class="t" style="left:1494.0px;top:544.4px;font-size:11px;line-height:11px;color:#fff;">M1</span>
<span class="t" style="left:1504.0px;top:631px;font-size:11px;line-height:11px;color:#fff;">MR</span>
<svg style="left:1103.5px;top:740px" width="9" height="8" viewBox="0 0 9 8"><rect x="1.6" y="0.2" width="5.8" height="3.6" rx="1.4" fill="#c4c4c4"/><rect x="2" y="1.1" width="1.7" height="1.7" fill="#0a8a0a"/><rect x="3.3" y="2" width="1" height="1" fill="#e6e600"/><rect x="0" y="3.7" width="8" height="1.1" fill="#111"/><rect x="3.6" y="3.7" width="1" height="1.1" fill="#ddd"/><path d="M1.5 5 H6.6 L5.6 6.9 H2.5 Z" fill="#00008a"/></svg>
<span class="t" style="left:1119.0px;top:738px;font-size:12px;line-height:12px;color:#000;letter-spacing:0.41px;">Start</span>
<div style="left:1152px;top:735px;width:120px;height:18px;background:#fff;"></div>
<span class="t" style="left:1158.0px;top:738px;font-size:12px;line-height:12px;color:#000;letter-spacing:-0.05px;">2.442 GHz</span>
<svg style="left:1741px;top:740px" width="9" height="8" viewBox="0 0 9 8"><rect x="1.6" y="0.2" width="5.8" height="3.6" rx="1.4" fill="#c4c4c4"/><rect x="2" y="1.1" width="1.7" height="1.7" fill="#0a8a0a"/><rect x="3.3" y="2" width="1" height="1" fill="#e6e600"/><rect x="0" y="3.7" width="8" height="1.1" fill="#111"/><rect x="3.6" y="3.7" width="1" height="1.1" fill="#ddd"/><path d="M1.5 5 H6.6 L5.6 6.9 H2.5 Z" fill="#00008a"/></svg>
<span class="t" style="left:1757.4px;top:738px;font-size:12px;line-height:12px;color:#000;letter-spacing:0.10px;">Stop</span>
<div style="left:1786px;top:735px;width:110px;height:18px;background:#fff;"></div>
<span class="t" style="left:1790.4px;top:738px;font-size:12px;line-height:12px;color:#000;letter-spacing:-0.05px;">2.482 GHz</span>
<div style="left:0px;top:763px;width:1920px;height:3px;background:#f3f3f3;"></div>
<div style="left:0px;top:766px;width:1920px;height:174px;background:#fdfdfd;border:1px solid #d9d9d9;border-radius:3px;"></div>
<span class="t" style="left:8.2px;top:773.5px;font-size:12px;line-height:12px;color:#000;letter-spacing:0.08px;">Time Overview</span>
<span class="t" style="left:8.2px;top:787.7px;font-size:12px;line-height:12px;color:#000;letter-spacing:0.23px;">Settings</span>
<div style="left:113.5px;top:771px;width:1740px;height:163px;background:#fdfdfd;border:1px solid #e0e0e0;border-radius:3px;"></div>
<div style="left:116px;top:794px;width:1732px;height:135px;background:#fdfdfd;border:1px solid #2b83c9;border-radius:2px;box-shadow:1px 1px 1px rgba(0,0,0,.18);"></div>
<div style="left:162.5px;top:775.8px;width:44.5px;height:18.7px;border:1px solid #2b83c9;border-bottom:none;border-radius:3px 3px 0 0;background:linear-gradient(#fdfdfd,#ececec);box-shadow:inset 0 0 0 1px #fff;"></div>
<div style="left:209.5px;top:775.8px;width:35.5px;height:18.7px;border:1px solid #2b83c9;border-bottom:none;border-radius:3px 3px 0 0;background:linear-gradient(#fdfdfd,#ececec);box-shadow:inset 0 0 0 1px #fff;"></div>
<div style="left:122.5px;top:772.8px;width:38.5px;height:22.7px;border:1px solid #2b83c9;border-bottom:none;border-radius:3px 3px 0 0;background:#fdfdfd;"></div>
<span class="t" style="left:128.0px;top:779px;font-size:12px;line-height:12px;color:#000;letter-spacing:-0.68px;">Scale</span>
<span class="t" style="left:168.0px;top:780px;font-size:12px;line-height:12px;color:#000;letter-spacing:-0.29px;">Traces</span>
<span class="t" style="left:214.0px;top:780px;font-size:12px;line-height:12px;color:#000;letter-spacing:-0.25px;">Prefs</span>
<div style="left:126px;top:797px;width:189px;height:128px;border:1px solid #d6d6d6;border-radius:2px;background:#fdfdfd;box-shadow:1px 1px 0 #eee;"></div>
<div style="left:127px;top:798px;width:187px;height:20px;background:linear-gradient(#f4f4f4,#e2e2e2);"></div>
<span class="t" style="left:138.2px;top:802.2px;font-size:12px;line-height:12px;color:#000;letter-spacing:0.13px;">Vertical</span>
<span class="t" style="left:158.3px;top:826px;font-size:12px;line-height:12px;color:#000;letter-spacing:-0.39px;">Scale:</span>
<div class="inp" style="left:197px;top:821.3px;width:111px;height:20.7px;"></div>
<span class="t" style="left:202.0px;top:826.5px;font-size:12px;line-height:12px;color:#000;letter-spacing:0.26px;">100.00 dB</span>
<span class="t" style="left:146.0px;top:861.7px;font-size:12px;line-height:12px;color:#000;">Position:</span>
<div class="inp" style="left:197px;top:857.3px;width:111px;height:20.7px;"></div>
<span class="t" style="left:202.0px;top:862.8px;font-size:12px;line-height:12px;color:#000;letter-spacing:0.27px;">-5.00 dBm</span>
<div class="btn" style="left:197px;top:893.3px;width:96px;height:22px;"></div>
<span class="t" style="left:218.4px;top:898.2px;font-size:12px;line-height:12px;color:#000;letter-spacing:-0.09px;">Autoscale</span>
<div class="btn" style="left:378px;top:850.4px;width:88px;height:31px;"></div>
<span class="t" style="left:390.2px;top:861px;font-size:12px;line-height:12px;color:#000;letter-spacing:-0.23px;">Reset Scale</span>
<div style="left:520.5px;top:797px;width:188px;height:128px;border:1px solid #d6d6d6;border-radius:2px;background:#fdfdfd;box-shadow:1px 1px 0 #eee;"></div>
<div style="left:521.5px;top:798px;width:186px;height:20px;background:linear-gradient(#f4f4f4,#e2e2e2);"></div>
<span class="t" style="left:532.0px;top:802.2px;font-size:12px;line-height:12px;color:#000;letter-spacing:-0.11px;">Horizontal</span>
<span class="t" style="left:555.3px;top:826px;font-size:12px;line-height:12px;color:#000;letter-spacing:-0.39px;">Scale:</span>
<div class="inp" style="left:590.4px;top:821.3px;width:110.4px;height:20.7px;"></div>
<span class="t" style="left:595.2px;top:826.5px;font-size:12px;line-height:12px;color:#000;letter-spacing:0.23px;">269.644 ms</span>
<span class="t" style="left:542.2px;top:861.7px;font-size:12px;line-height:12px;color:#000;">Position:</span>
<div class="inp" style="left:590.4px;top:857.3px;width:110.4px;height:20.7px;"></div>
<span class="t" style="left:595.2px;top:862.8px;font-size:12px;line-height:12px;color:#000;letter-spacing:0.24px;">0.000 s</span>
<div class="btn" style="left:590.4px;top:893.3px;width:95.4px;height:22px;"></div>
<span class="t" style="left:611.3px;top:898.2px;font-size:12px;line-height:12px;color:#000;letter-spacing:-0.05px;">Autoscale</span>
<div class="btn" style="left:10px;top:894.4px;width:75px;height:37px;"></div>
<span class="t" style="left:25.4px;top:900.8px;font-size:12px;line-height:12px;color:#000;letter-spacing:0.03px;">Restore</span>
<span class="t" style="left:24.6px;top:915.3px;font-size:12px;line-height:12px;color:#000;letter-spacing:0.12px;">Defaults</span>
<div class="btn" style="left:1870px;top:775.3px;width:36px;height:35.3px;"></div>
<svg style="left:1879px;top:784px" width="18" height="18" viewBox="0 0 18 18"><path d="M2.2 2.4 L16 16.2 M16 2.4 L2.2 16.2" stroke="#0a0a0a" stroke-width="2.9"/></svg>
<div style="left:0px;top:940px;width:1920px;height:35px;background:#fdfdfd;border:1px solid #dcdcdc;border-radius:3px;"></div>
<span class="t" style="left:3.7px;top:950px;font-size:15px;line-height:15px;color:#000;letter-spacing:-0.43px;">Markers</span>
<div style="left:115px;top:945.2px;width:23.6px;height:24.4px;border:1px solid #a9a9a9;background:#fff;"></div>
<svg style="left:119.8px;top:954px" width="13.4" height="8" viewBox="-1 -1 13.4 8"><defs><linearGradient id="tg120" x1="0" y1="0" x2="1" y2="0"><stop offset="0" stop-color="#a8a8a8"/><stop offset="0.6" stop-color="#dcdcdc"/><stop offset="0.85" stop-color="#f4f4f4"/></linearGradient></defs><path d="M0 0.2 L11.4 0.2 L5.7 6 Z" fill="url(#tg120)"/><path d="M0 0.2 H8.208" stroke="#9c9c9c" stroke-width="0.9"/><path d="M0 0.2 L5.7 6" stroke="#b4b4b4" stroke-width="0.8"/><path d="M11.4 0 L5.6000000000000005 6" stroke="#14148c" stroke-width="1.25"/></svg>
<span class="t" style="left:147.0px;top:950px;font-size:15px;line-height:15px;color:#000;letter-spacing:-0.84px;">M1</span>
<div class="btn" style="left:752.4px;top:945.3px;width:81px;height:24.4px;border-color:#a8cbe8;background:linear-gradient(#fff,#f6f6f6);"></div>
<span class="t" style="left:759.8px;top:950px;font-size:15px;line-height:15px;color:#9db6cc;letter-spacing:0.04px;">To Center</span>
<div class="btn" style="left:843px;top:945.3px;width:47px;height:24.4px;"></div>
<span class="t" style="left:850.2px;top:950px;font-size:15px;line-height:15px;color:#000;letter-spacing:-0.93px;">Peak</span>
<div class="btn" style="left:896px;top:945.3px;width:27.5px;height:24.4px;"></div>
<svg style="left:897.75px;top:945.8px" width="24" height="24" viewBox="-12 -12 24 24"><path transform="rotate(0)" d="M-9.6 0 L-1.6 -8.8 L-1.6 -4.2 L9.4 -4.2 L9.4 4.2 L-1.6 4.2 L-1.6 8.8 Z" fill="#f4f4f4" stroke="#161616" stroke-width="1.3" stroke-linejoin="miter"/></svg>
<div class="btn" style="left:933px;top:945.3px;width:26.8px;height:24.4px;"></div>
<svg style="left:934.4px;top:945.8px" width="24" height="24" viewBox="-12 -12 24 24"><path transform="rotate(180)" d="M-9.6 0 L-1.6 -8.8 L-1.6 -4.2 L9.4 -4.2 L9.4 4.2 L-1.6 4.2 L-1.6 8.8 Z" fill="#f4f4f4" stroke="#161616" stroke-width="1.3" stroke-linejoin="miter"/></svg>
<div class="btn" style="left:969px;top:945.3px;width:26.6px;height:24.4px;"></div>
<svg style="left:970.3px;top:945.8px" width="24" height="24" viewBox="-12 -12 24 24"><path transform="rotate(270)" d="M-9.6 0 L-1.6 -8.8 L-1.6 -4.2 L9.4 -4.2 L9.4 4.2 L-1.6 4.2 L-1.6 8.8 Z" fill="#f4f4f4" stroke="#161616" stroke-width="1.3" stroke-linejoin="miter"/></svg>
<div class="btn" style="left:1005px;top:945.3px;width:27.4px;height:24.4px;"></div>
<svg style="left:1006.7px;top:945.8px" width="24" height="24" viewBox="-12 -12 24 24"><path transform="rotate(90)" d="M-9.6 0 L-1.6 -8.8 L-1.6 -4.2 L9.4 -4.2 L9.4 4.2 L-1.6 4.2 L-1.6 8.8 Z" fill="#f4f4f4" stroke="#161616" stroke-width="1.3" stroke-linejoin="miter"/></svg>
<div style="left:1297.8px;top:945px;width:111px;height:24px;border:1px solid #a9a9a9;background:#fff;"></div>
<div style="left:1393.6px;top:946.8px;width:13.6px;height:19.6px;border:1px solid #2b83c9;border-radius:3px;background:linear-gradient(#ffffff,#e6eef6);"></div>
<svg style="left:1395.4px;top:953px" width="10" height="8" viewBox="0 0 10 8"><path d="M1 1.5 L5 6 L9 1.5" fill="none" stroke="#2a7fd0" stroke-width="1.4"/></svg>
<span class="t" style="left:1302.9px;top:950px;font-size:15px;line-height:15px;color:#000;letter-spacing:-0.59px;">Time</span>
<div style="left:1415px;top:945px;width:139px;height:24px;border:1px solid #a9a9a9;background:#fff;"></div>
<div style="left:1418.6px;top:948.4px;width:70.6px;height:17px;background:#2f80d6;"></div>
<span class="t" style="left:1420.0px;top:950px;font-size:15px;line-height:15px;color:#fff;letter-spacing:-0.26px;">10.225 ms</span>
<div class="btn" style="left:1768px;top:945.4px;width:51px;height:24.4px;"></div>
<span class="t" style="left:1776.5px;top:950px;font-size:15px;line-height:15px;color:#000;letter-spacing:-0.46px;">Table</span>
<div class="btn" style="left:1825px;top:945.4px;width:53px;height:24.4px;"></div>
<span class="t" style="left:1831.0px;top:950px;font-size:15px;line-height:15px;color:#000;letter-spacing:-0.55px;">Define</span>
<div class="btn" style="left:1884px;top:945.4px;width:28px;height:24.4px;"></div>
<svg style="left:1890px;top:950px" width="16" height="16" viewBox="0 0 16 16"><path d="M2.4 2.4 L13.6 13.6 M13.6 2.4 L2.4 13.6" stroke="#111" stroke-width="2.2"/></svg>
<div style="left:0px;top:975px;width:1920px;height:34px;background:#fdfdfd;border:1px solid #e2e2e2;border-radius:3px;"></div>
<span class="t" style="left:3.7px;top:984px;font-size:15px;line-height:15px;color:#000;letter-spacing:-0.21px;">Time Overview</span>
<span class="t" style="left:116.5px;top:984px;font-size:15px;line-height:15px;color:#000;letter-spacing:-0.51px;">Frequency</span>
<div style="left:189.3px;top:979.4px;width:93.6px;height:23.2px;border:1px solid #a9a9a9;background:#fff;"></div>
<span class="t" style="left:193.4px;top:984px;font-size:15px;line-height:15px;color:#000;letter-spacing:-0.40px;">2.46200 GHz</span>
<span class="t" style="left:615.0px;top:984px;font-size:15px;line-height:15px;color:#000;letter-spacing:-0.33px;">Ref Lev</span>
<div style="left:671.2px;top:979.5px;width:93.6px;height:23px;border:1px solid #a9a9a9;background:#fff;"></div>
<span class="t" style="left:675.8px;top:983.6px;font-size:15px;line-height:15px;color:#000;letter-spacing:-0.15px;">-5.00 dBm</span>
<div class="btn" style="left:1765px;top:979.5px;width:60px;height:23.2px;"></div>
<span class="t" style="left:1769.0px;top:983.6px;font-size:15px;line-height:15px;color:#000;letter-spacing:-0.45px;">Markers</span>
<div class="btn" style="left:1830px;top:979.5px;width:52px;height:23.2px;"></div>
<span class="t" style="left:1834.6px;top:983.6px;font-size:15px;line-height:15px;color:#000;letter-spacing:-0.32px;">Traces</span>
<div class="btn" style="left:1886px;top:978px;width:26px;height:26px;"></div>
<svg style="left:1886px;top:978px" width="26" height="26" viewBox="0 0 26 26"><path d="M10.16 4.57 L10.65 1.85 L15.35 1.85 L15.84 4.57 L16.95 5.03 L19.22 3.45 L22.55 6.78 L20.97 9.05 L21.43 10.16 L24.15 10.65 L24.15 15.35 L21.43 15.84 L20.97 16.95 L22.55 19.22 L19.22 22.55 L16.95 20.97 L15.84 21.43 L15.35 24.15 L10.65 24.15 L10.16 21.43 L9.05 20.97 L6.78 22.55 L3.45 19.22 L5.03 16.95 L4.57 15.84 L1.85 15.35 L1.85 10.65 L4.57 10.16 L5.03 9.05 L3.45 6.78 L6.78 3.45 L9.05 5.03 Z M18.40 13.00 A5.4 5.4 0 1 0 7.60 13.00 A5.4 5.4 0 1 0 18.40 13.00 Z" fill="#0c0c0c" fill-rule="evenodd"/></svg>
<div style="left:0px;top:1009px;width:1920px;height:30px;background:linear-gradient(#ffffff,#f2f2f2 50%,#dedede);border:1px solid #2b83c9;border-radius:2px;"></div>
<span class="t" style="left:8.2px;top:1018.7px;font-size:11px;line-height:11px;color:#000;letter-spacing:0.39px;">Stopped</span>
<span class="t" style="left:104.6px;top:1018.7px;font-size:11px;line-height:11px;color:#000;letter-spacing:0.24px;">Acq BW: 40.00 MHz, Acq Length: 66.587 ms</span>
<div style="left:97.8px;top:1011px;width:2px;height:26.5px;background:linear-gradient(90deg,#b4b4b4 50%,#fdfdfd 50%);"></div>
<div style="left:377px;top:1011px;width:2px;height:26.5px;background:linear-gradient(90deg,#b4b4b4 50%,#fdfdfd 50%);"></div>
<div style="left:443.6px;top:1011px;width:2px;height:26.5px;background:linear-gradient(90deg,#b4b4b4 50%,#fdfdfd 50%);"></div>
<div style="left:549px;top:1011px;width:2px;height:26.5px;background:linear-gradient(90deg,#b4b4b4 50%,#fdfdfd 50%);"></div>
<div style="left:618.7px;top:1011px;width:2px;height:26.5px;background:linear-gradient(90deg,#b4b4b4 50%,#fdfdfd 50%);"></div>
<div style="left:699px;top:1011px;width:2px;height:26.5px;background:linear-gradient(90deg,#b4b4b4 50%,#fdfdfd 50%);"></div>
<div style="left:779.2px;top:1011px;width:2px;height:26.5px;background:linear-gradient(90deg,#b4b4b4 50%,#fdfdfd 50%);"></div>
<div style="left:833.4px;top:1011px;width:2px;height:26.5px;background:linear-gradient(90deg,#b4b4b4 50%,#fdfdfd 50%);"></div>
<div style="left:2px;top:1011px;width:1px;height:26px;background:#cfcfcf;"></div>
<svg style="left:1886px;top:1012px" width="24" height="24" viewBox="1886 1012 24 24"><g transform="translate(1898 1023.5) rotate(-42.8)"><path d="M-1.3 -4.3 L-1.3 4.3 L-6.6 2.6 L-10.6 0.9 L-10.6 -0.9 L-6.6 -2.6 Z" fill="#ee1c24" stroke="#3a2c2c" stroke-width="0.9" stroke-dasharray="1.6 0.7"/><path d="M1.3 -4.3 L1.3 4.3 L6.6 2.6 L10.6 0.9 L10.6 -0.9 L6.6 -2.6 Z" fill="#ee1c24" stroke="#3a2c2c" stroke-width="0.9" stroke-dasharray="1.6 0.7"/><rect x="-0.9" y="-4.4" width="1.8" height="8.8" fill="#fff"/></g></svg>
</body></html>
